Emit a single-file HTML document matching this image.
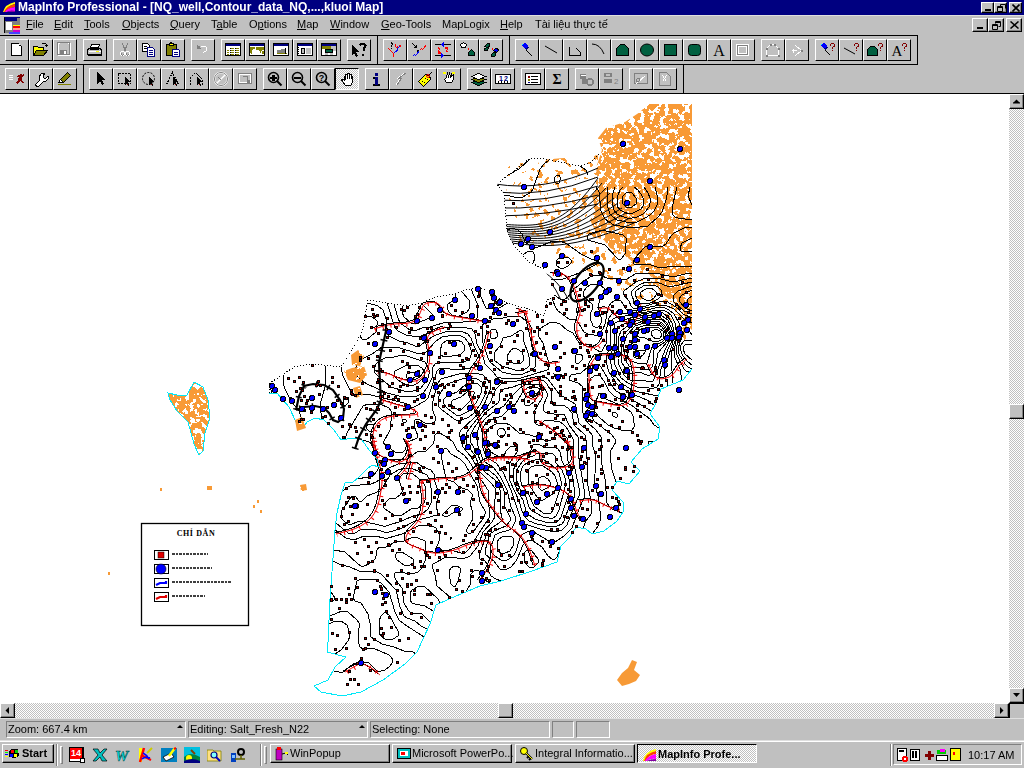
<!DOCTYPE html><html><head><meta charset="utf-8"><style>
*{margin:0;padding:0;box-sizing:border-box}
html,body{width:1024px;height:768px;overflow:hidden;background:#c0c0c0;font-family:"Liberation Sans",sans-serif;font-size:11px;color:#000}
.a{position:absolute}
.btn{position:absolute;width:24px;height:22px;background:#c0c0c0;border-top:1px solid #fff;border-left:1px solid #fff;border-right:1px solid #000;border-bottom:1px solid #000}
.btn svg{position:absolute;left:3px;top:2px}
.t{position:absolute;white-space:nowrap;will-change:transform}
.u{text-decoration:underline}
.dith{background-color:#fff;background-image:linear-gradient(45deg,#c0c0c0 25%,transparent 25%,transparent 75%,#c0c0c0 75%),linear-gradient(45deg,#c0c0c0 25%,transparent 25%,transparent 75%,#c0c0c0 75%);background-size:2px 2px;background-position:0 0,1px 1px}
.sunk{position:absolute;border-top:1px solid #808080;border-left:1px solid #808080;border-right:1px solid #fff;border-bottom:1px solid #fff}
.rais{position:absolute;background:#c0c0c0;border-top:1px solid #fff;border-left:1px solid #fff;border-right:1px solid #000;border-bottom:1px solid #000;box-shadow:inset -1px -1px 0 #808080}
</style></head><body>
<div class="a" style="left:0;top:0;width:1024px;height:15px;background:#000080"></div>
<div class="a" style="left:0;top:15px;width:1024px;height:1px;background:#dfdfdf"></div>
<div class="t" style="left:18px;top:0px;height:15px;line-height:15px;color:#fff;font-weight:bold;font-size:12px">MapInfo Professional - [NQ_well,Contour_data_NQ,...,kluoi Map]</div>
<div class="t" style="left:26px;top:16px;height:16px;line-height:16px"><span class="u">F</span>ile</div>
<div class="t" style="left:54px;top:16px;height:16px;line-height:16px"><span class="u">E</span>dit</div>
<div class="t" style="left:84px;top:16px;height:16px;line-height:16px"><span class="u">T</span>ools</div>
<div class="t" style="left:122px;top:16px;height:16px;line-height:16px"><span class="u">O</span>bjects</div>
<div class="t" style="left:170px;top:16px;height:16px;line-height:16px"><span class="u">Q</span>uery</div>
<div class="t" style="left:211px;top:16px;height:16px;line-height:16px">T<span class="u">a</span>ble</div>
<div class="t" style="left:249px;top:16px;height:16px;line-height:16px">O<span class="u">p</span>tions</div>
<div class="t" style="left:297px;top:16px;height:16px;line-height:16px"><span class="u">M</span>ap</div>
<div class="t" style="left:330px;top:16px;height:16px;line-height:16px"><span class="u">W</span>indow</div>
<div class="t" style="left:381px;top:16px;height:16px;line-height:16px"><span class="u">G</span>eo-Tools</div>
<div class="t" style="left:442px;top:16px;height:16px;line-height:16px">MapLogix</div>
<div class="t" style="left:500px;top:16px;height:16px;line-height:16px"><span class="u">H</span>elp</div>
<div class="t" style="left:535px;top:16px;height:16px;line-height:16px">Tài liệu thực tế</div>
<div class="a" style="left:0;top:35px;width:918px;height:30px;border:1px solid #000;border-left:none"></div>
<div class="a" style="left:0;top:64px;width:684px;height:30px;border:1px solid #000;border-left:none"></div>
<div class="a" style="left:0;top:93px;width:1024px;height:1px;background:#000"></div>
<div class="a" style="left:377px;top:35px;width:1px;height:30px;background:#000"></div>
<div class="a" style="left:509px;top:35px;width:1px;height:30px;background:#000"></div>
<div class="a" style="left:83px;top:64px;width:1px;height:30px;background:#000"></div>
<div class="btn" style="left:5px;top:39px"><svg width="16" height="16" viewBox="0 0 16 16" style="left:3px;top:2px" shape-rendering="crispEdges"><path d="M2.5 1.5h7l3 3v9h-10z" fill="#fff" stroke="#000" stroke-width="1" /><rect x="9" y="2" width="2" height="2" fill="#fff"/><rect x="10" y="3" width="1" height="1" fill="#000"/></svg></div>
<div class="btn" style="left:29px;top:39px"><svg width="16" height="16" viewBox="0 0 16 16" style="left:3px;top:2px" shape-rendering="crispEdges"><path d="M0.5 4.5h4l1 1h5v3h-7l-3 5z" fill="#ffff00" stroke="#000" stroke-width="1" /><path d="M3.5 8.5h11l-4 5h-10z" fill="#808000" stroke="#000" stroke-width="1" /><path d="M8.5 2.5l1-1h3l1 1v2" fill="none" stroke="#000" stroke-width="1" /><rect x="12" y="3" width="3" height="1" fill="#000"/><rect x="13" y="4" width="1" height="1" fill="#000"/></svg></div>
<div class="btn" style="left:53px;top:39px"><svg width="16" height="16" viewBox="0 0 16 16" style="left:3px;top:2px" shape-rendering="crispEdges"><path d="M1.5 1.5h12v12h-12z" fill="none" stroke="#fff" stroke-width="1" /><path d="M0.5 0.5h12v12h-12z" fill="none" stroke="#808080" stroke-width="1" /><rect x="3" y="1" width="8" height="5" fill="#c0c0c0"/><rect x="3" y="8" width="7" height="5" fill="#808080"/><rect x="7" y="9" width="2" height="3" fill="#fff"/></svg></div>
<div class="btn" style="left:83px;top:39px"><svg width="16" height="16" viewBox="0 0 16 16" style="left:3px;top:2px" shape-rendering="crispEdges"><path d="M4.5 2.5h8l-1 3h-8z" fill="#fff" stroke="#000" stroke-width="1" /><path d="M1.5 6.5h12l1 2v4h-14v-4z" fill="#c0c0c0" stroke="#000" stroke-width="1" /><rect x="2" y="9" width="12" height="1" fill="#fff"/><rect x="9" y="9" width="3" height="1" fill="#ffff00"/><rect x="1" y="12" width="14" height="2" fill="#000"/><rect x="3" y="7" width="9" height="1" fill="#000"/></svg></div>
<div class="btn" style="left:113px;top:39px"><svg width="16" height="16" viewBox="0 0 16 16" style="left:3px;top:2px" shape-rendering="crispEdges"><path d="M5.5 1.5l3 8M10.5 1.5l-3 8" fill="none" stroke="#808080" stroke-width="1" /><path d="M3.5 10.5a2 2 0 1 0 4 2a2 2 0 1 0-4-2M8.5 10.5a2 2 0 1 0 4 2a2 2 0 1 0-4-2" fill="none" stroke="#fff" stroke-width="1" /><path d="M4.5 11.5a1 1 0 1 0 2 1M9.5 11.5a1 1 0 1 0 2 1" fill="none" stroke="#808080" stroke-width="1" /></svg></div>
<div class="btn" style="left:137px;top:39px"><svg width="16" height="16" viewBox="0 0 16 16" style="left:3px;top:2px" shape-rendering="crispEdges"><path d="M1.5 1.5h5l2 2v6h-7z" fill="#fff" stroke="#000" stroke-width="1" /><rect x="3" y="4" width="3" height="1" fill="#000"/><rect x="3" y="6" width="3" height="1" fill="#000"/><path d="M6.5 5.5h5l2 2v7h-7z" fill="#fff" stroke="#000080" stroke-width="1" /><rect x="8" y="8" width="4" height="1" fill="#000080"/><rect x="8" y="10" width="4" height="1" fill="#000080"/><rect x="8" y="12" width="4" height="1" fill="#000080"/></svg></div>
<div class="btn" style="left:161px;top:39px"><svg width="16" height="16" viewBox="0 0 16 16" style="left:3px;top:2px" shape-rendering="crispEdges"><path d="M1.5 2.5h10v11h-10z" fill="#808000" stroke="#000" stroke-width="1" /><path d="M4.5 1.5h4v2h-4z" fill="#ffff00" stroke="#000" stroke-width="1" /><rect x="5" y="0" width="2" height="1" fill="#000"/><path d="M7.5 7.5h6l1 1v6h-7z" fill="#fff" stroke="#000080" stroke-width="1" /><rect x="9" y="10" width="4" height="1" fill="#000080"/><rect x="9" y="12" width="4" height="1" fill="#000080"/></svg></div>
<div class="btn" style="left:191px;top:39px"><svg width="16" height="16" viewBox="0 0 16 16" style="left:3px;top:2px" shape-rendering="crispEdges"><path d="M5.5 6.5l-3 -3M2.5 3.5v3h3" fill="none" stroke="#808080" stroke-width="1" /><path d="M5.5 4.5h4a2.5 2.5 0 0 1 0 5l-2 2" fill="none" stroke="#fff" stroke-width="1" /><rect x="2" y="4" width="3" height="3" fill="#808080"/></svg></div>
<div class="btn" style="left:221px;top:39px"><svg width="16" height="16" viewBox="0 0 16 16" style="left:3px;top:2px" shape-rendering="crispEdges"><rect x="0" y="1" width="16" height="13" fill="#000"/><rect x="1" y="2" width="14" height="2" fill="#000080"/><rect x="1" y="4" width="14" height="9" fill="#fff"/><rect x="5" y="6" width="1" height="1" fill="#000"/><rect x="6" y="6" width="3" height="1" fill="#808000"/><rect x="10" y="6" width="1" height="1" fill="#000"/><rect x="11" y="6" width="3" height="1" fill="#808000"/><rect x="5" y="8" width="1" height="1" fill="#000"/><rect x="6" y="8" width="3" height="1" fill="#808000"/><rect x="10" y="8" width="1" height="1" fill="#000"/><rect x="11" y="8" width="3" height="1" fill="#808000"/><rect x="5" y="10" width="1" height="1" fill="#000"/><rect x="6" y="10" width="3" height="1" fill="#808000"/><rect x="10" y="10" width="1" height="1" fill="#000"/><rect x="11" y="10" width="3" height="1" fill="#808000"/><rect x="5" y="12" width="1" height="1" fill="#000"/><rect x="6" y="12" width="3" height="1" fill="#808000"/><rect x="10" y="12" width="1" height="1" fill="#000"/><rect x="11" y="12" width="3" height="1" fill="#808000"/><rect x="2" y="8" width="2" height="1" fill="#808000"/><rect x="2" y="10" width="2" height="1" fill="#808000"/><rect x="2" y="12" width="2" height="1" fill="#808000"/></svg></div>
<div class="btn" style="left:245px;top:39px"><svg width="16" height="16" viewBox="0 0 16 16" style="left:3px;top:2px" shape-rendering="crispEdges"><rect x="0" y="1" width="16" height="13" fill="#000"/><rect x="1" y="2" width="14" height="2" fill="#000080"/><rect x="1" y="4" width="14" height="9" fill="#fff"/><path d="M1 5h5v2h-2l-1 2v3h-1l-1-3z" fill="#808000" stroke="none" stroke-width="1" /><path d="M7 5h8v3h-2l-1 1v2h-1v-2l-2-1-2 0z" fill="#808000" stroke="none" stroke-width="1" /><rect x="13" y="9" width="2" height="3" fill="#808000"/></svg></div>
<div class="btn" style="left:269px;top:39px"><svg width="16" height="16" viewBox="0 0 16 16" style="left:3px;top:2px" shape-rendering="crispEdges"><rect x="0" y="1" width="16" height="13" fill="#000"/><rect x="1" y="2" width="14" height="2" fill="#000080"/><rect x="1" y="4" width="14" height="9" fill="#fff"/><rect x="4" y="8" width="5" height="4" fill="#808080"/><rect x="8" y="6" width="5" height="6" fill="#808080"/><rect x="4" y="11" width="10" height="1" fill="#808000"/><rect x="8" y="6" width="5" height="1" fill="#fff"/><rect x="12" y="6" width="1" height="6" fill="#000"/></svg></div>
<div class="btn" style="left:293px;top:39px"><svg width="16" height="16" viewBox="0 0 16 16" style="left:3px;top:2px" shape-rendering="crispEdges"><rect x="0" y="1" width="16" height="13" fill="#000"/><rect x="1" y="2" width="14" height="2" fill="#000080"/><rect x="1" y="4" width="14" height="9" fill="#fff"/><rect x="4" y="6" width="4" height="6" fill="#000"/><rect x="5" y="7" width="2" height="4" fill="#c0c0c0"/><rect x="9" y="6" width="5" height="6" fill="#c0c0c0"/><rect x="1" y="5" width="1" height="1" fill="#000"/><rect x="1" y="7" width="1" height="1" fill="#000"/><rect x="1" y="9" width="1" height="1" fill="#000"/><rect x="1" y="11" width="1" height="1" fill="#000"/><rect x="4" y="4" width="1" height="1" fill="#fff"/><rect x="7" y="4" width="1" height="1" fill="#fff"/><rect x="10" y="4" width="1" height="1" fill="#fff"/><rect x="13" y="4" width="1" height="1" fill="#fff"/></svg></div>
<div class="btn" style="left:317px;top:39px"><svg width="16" height="16" viewBox="0 0 16 16" style="left:3px;top:2px" shape-rendering="crispEdges"><rect x="0" y="1" width="16" height="13" fill="#000"/><rect x="1" y="2" width="14" height="2" fill="#000080"/><rect x="1" y="4" width="14" height="9" fill="#fff"/><rect x="1" y="4" width="10" height="3" fill="#808000"/><rect x="10" y="4" width="5" height="5" fill="#c0c0c0"/><rect x="4" y="7" width="8" height="4" fill="#006040"/><path d="M4.5 7.5h7v3h-7z" fill="none" stroke="#000" stroke-width="1" /><rect x="4" y="11" width="3" height="2" fill="#c0c0c0"/><rect x="9" y="11" width="3" height="2" fill="#c0c0c0"/></svg></div>
<div class="btn" style="left:347px;top:39px"><svg width="16" height="16" viewBox="0 0 16 16" style="left:3px;top:2px" shape-rendering="crispEdges"><path d="M1 3v10l2-2 2 4 2-1-2-4h3z" fill="#000" stroke="none" stroke-width="1" /><path d="M8.5 3.5q1-2 3-2t3 2q0 2-2 3v2" fill="none" stroke="#000" stroke-width="2" /><rect x="11" y="12" width="2" height="2" fill="#000"/></svg></div>
<div class="btn" style="left:383px;top:39px"><svg width="16" height="16" viewBox="0 0 16 16" style="left:3px;top:2px" shape-rendering="crispEdges"><path d="M1.5 6.5l1 1 1 1 1 1 1 1 1 1v3" fill="none" stroke="#ff0000" stroke-width="1" /><path d="M6.5 11.5l2-2 2-1 0-2 1-1 1-1" fill="none" stroke="#0000ff" stroke-width="1" /><path d="M8.5 1.5v3l1 1 2-1 1-1 2 1" fill="none" stroke="#ff0000" stroke-width="1" /><path d="M3.5 1.5q1-1 2 0t-1 2v1" fill="none" stroke="#000" stroke-width="1" /><rect x="4" y="6" width="1" height="1" fill="#000"/></svg></div>
<div class="btn" style="left:407px;top:39px"><svg width="16" height="16" viewBox="0 0 16 16" style="left:3px;top:2px" shape-rendering="crispEdges"><path d="M1.5 1.5l4 4M5.5 2.5v3h-3" fill="none" stroke="#000" stroke-width="1" /><rect x="6" y="8" width="2" height="2" fill="#000"/><path d="M1.5 14.5l2-2 1 1 2-2 1-2" fill="none" stroke="#0000ff" stroke-width="1" /><path d="M8.5 8.5l2-2 1 1 2-2 1-2" fill="none" stroke="#ff0000" stroke-width="1" /></svg></div>
<div class="btn" style="left:431px;top:39px"><svg width="16" height="16" viewBox="0 0 16 16" style="left:3px;top:2px" shape-rendering="crispEdges"><rect x="0" y="2" width="16" height="1" fill="#000"/><rect x="0" y="13" width="16" height="1" fill="#000"/><path d="M9 0v5l-3-2.5z" fill="#0000ff" stroke="none" stroke-width="1" /><path d="M6 11v5l3-2.5z" fill="#0000ff" stroke="none" stroke-width="1" /><path d="M3.5 5.5l1 2-1 1 1 2" fill="none" stroke="#ff0000" stroke-width="1" /><path d="M11.5 5.5l1 2-1 1 1 2" fill="none" stroke="#ff0000" stroke-width="1" /><rect x="3" y="10" width="3" height="2" fill="#ff0000"/><rect x="10" y="5" width="3" height="2" fill="#ff0000"/></svg></div>
<div class="btn" style="left:455px;top:39px"><svg width="16" height="16" viewBox="0 0 16 16" style="left:3px;top:2px" shape-rendering="crispEdges"><path d="M1.5 2.5l3-2 3 2-1 3h-4z" fill="#fff" stroke="#000" stroke-width="1" /><path d="M8 7l2-2v3z" fill="#ff0000" stroke="none" stroke-width="1" /><path d="M9.5 10.5l3-3 3 3v3h-6z" fill="#006040" stroke="#000" stroke-width="1" /></svg></div>
<div class="btn" style="left:479px;top:39px"><svg width="16" height="16" viewBox="0 0 16 16" style="left:3px;top:2px" shape-rendering="crispEdges"><path d="M1.5 4.5l3-3h2v3l-2 1z" fill="#006040" stroke="#000" stroke-width="1" /><path d="M1.5 6.5l3-1h1l-1 3h-3z" fill="#006040" stroke="#000" stroke-width="1" /><path d="M8 7l2-2v3z" fill="#ff0000" stroke="none" stroke-width="1" /><path d="M10.5 8.5l2-2h2l1 2-2 2z" fill="#0000ff" stroke="#000" stroke-width="1" /><path d="M8.5 12.5l2-2h2v3l-1 1h-3z" fill="#006040" stroke="#000" stroke-width="1" /></svg></div>
<div class="btn" style="left:515px;top:39px"><svg width="16" height="16" viewBox="0 0 16 16" style="left:3px;top:2px" shape-rendering="crispEdges"><path d="M2 3l4-2 3 3-2 4z" fill="#0000ff" stroke="none" stroke-width="1" /><rect x="3" y="2" width="1" height="1" fill="#00ffff"/><path d="M7.5 8.5l6 6" fill="none" stroke="#000" stroke-width="1" /><path d="M5 6l5-1-2 3z" fill="#000080" stroke="none" stroke-width="1" /></svg></div>
<div class="btn" style="left:539px;top:39px"><svg width="16" height="16" viewBox="0 0 16 16" style="left:3px;top:2px" shape-rendering="crispEdges"><path d="M2 4L14 11" fill="none" stroke="#000" stroke-width="1" shape-rendering="auto"/></svg></div>
<div class="btn" style="left:563px;top:39px"><svg width="16" height="16" viewBox="0 0 16 16" style="left:3px;top:2px" shape-rendering="crispEdges"><path d="M2.5 4.5v9h11v-3l-4-4" fill="none" stroke="#000" stroke-width="1" /></svg></div>
<div class="btn" style="left:587px;top:39px"><svg width="16" height="16" viewBox="0 0 16 16" style="left:3px;top:2px" shape-rendering="crispEdges"><path d="M1 2q8 0 12 10" fill="none" stroke="#000" stroke-width="1" shape-rendering="auto"/></svg></div>
<div class="btn" style="left:611px;top:39px"><svg width="16" height="16" viewBox="0 0 16 16" style="left:3px;top:2px" shape-rendering="crispEdges"><path d="M1.5 6.5l4-4h4l4 4v7h-12z" fill="#006040" stroke="#000" stroke-width="1" /></svg></div>
<div class="btn" style="left:635px;top:39px"><svg width="16" height="16" viewBox="0 0 16 16" style="left:3px;top:2px" shape-rendering="crispEdges"><ellipse cx="8" cy="8" rx="6.5" ry="6" fill="#006040" stroke="#000" shape-rendering="auto"/></svg></div>
<div class="btn" style="left:659px;top:39px"><svg width="16" height="16" viewBox="0 0 16 16" style="left:3px;top:2px" shape-rendering="crispEdges"><path d="M1.5 2.5h12v11h-12z" fill="#006040" stroke="#000" stroke-width="1" /></svg></div>
<div class="btn" style="left:683px;top:39px"><svg width="16" height="16" viewBox="0 0 16 16" style="left:3px;top:2px" shape-rendering="crispEdges"><rect x="1.5" y="2.5" width="12" height="11" rx="3" fill="#006040" stroke="#000" shape-rendering="auto"/></svg></div>
<div class="btn" style="left:707px;top:39px"><svg width="16" height="16" viewBox="0 0 16 16" style="left:3px;top:2px" shape-rendering="crispEdges"><text x="8" y="14" font-family="Liberation Serif" font-size="16" text-anchor="middle" fill="#000">A</text></svg></div>
<div class="btn" style="left:731px;top:39px"><svg width="16" height="16" viewBox="0 0 16 16" style="left:3px;top:2px" shape-rendering="crispEdges"><path d="M1.5 2.5h12v11h-12z" fill="none" stroke="#fff" stroke-width="1" /><path d="M2.5 3.5h10v9h-10z" fill="none" stroke="#808080" stroke-width="1" /><path d="M3.5 4.5h8v7h-8z" fill="none" stroke="#fff" stroke-width="1" /></svg></div>
<div class="btn" style="left:761px;top:39px"><svg width="16" height="16" viewBox="0 0 16 16" style="left:3px;top:2px" shape-rendering="crispEdges"><path d="M1.5 6.5l4-4h4l4 4v7h-12z" fill="none" stroke="#fff" stroke-width="1" /><rect x="1" y="6" width="2" height="2" fill="#808080"/><rect x="5" y="2" width="2" height="2" fill="#808080"/><rect x="9" y="2" width="2" height="2" fill="#808080"/><rect x="13" y="6" width="2" height="2" fill="#808080"/><rect x="13" y="13" width="2" height="2" fill="#808080"/><rect x="1" y="13" width="2" height="2" fill="#808080"/></svg></div>
<div class="btn" style="left:785px;top:39px"><svg width="16" height="16" viewBox="0 0 16 16" style="left:3px;top:2px" shape-rendering="crispEdges"><path d="M6.5 3.5l6 5-6 5" fill="none" stroke="#fff" stroke-width="1" /><path d="M2.5 8.5h5M4.5 6.5v4" fill="none" stroke="#fff" stroke-width="1" /><rect x="12" y="8" width="2" height="2" fill="#808080"/></svg></div>
<div class="btn" style="left:815px;top:39px"><svg width="16" height="16" viewBox="0 0 16 16" style="left:3px;top:2px" shape-rendering="crispEdges"><path d="M1 3l4-2 3 3-2 4z" fill="#0000ff" stroke="none" stroke-width="1" /><rect x="2" y="2" width="1" height="1" fill="#00ffff"/><path d="M6.5 8.5l5 5" fill="none" stroke="#000" stroke-width="1" /><path d="M4 6l5-1-2 3z" fill="#000080" stroke="none" stroke-width="1" /><path d="M11.5 3.5q0-2 2-2t2 2q0 1-2 2v1" fill="none" stroke="#800000" stroke-width="1" /><rect x="13" y="8" width="1" height="1" fill="#800000"/></svg></div>
<div class="btn" style="left:839px;top:39px"><svg width="16" height="16" viewBox="0 0 16 16" style="left:3px;top:2px" shape-rendering="crispEdges"><path d="M1 6L12 12" fill="none" stroke="#000" stroke-width="1" shape-rendering="auto"/><path d="M11.5 3.5q0-2 2-2t2 2q0 1-2 2v1" fill="none" stroke="#800000" stroke-width="1" /><rect x="13" y="8" width="1" height="1" fill="#800000"/></svg></div>
<div class="btn" style="left:863px;top:39px"><svg width="16" height="16" viewBox="0 0 16 16" style="left:3px;top:2px" shape-rendering="crispEdges"><path d="M0.5 7.5l3-3h4l3 3v6h-10z" fill="#006040" stroke="#000" stroke-width="1" /><path d="M11.5 3.5q0-2 2-2t2 2q0 1-2 2v1" fill="none" stroke="#800000" stroke-width="1" /><rect x="13" y="8" width="1" height="1" fill="#800000"/></svg></div>
<div class="btn" style="left:887px;top:39px"><svg width="16" height="16" viewBox="0 0 16 16" style="left:3px;top:2px" shape-rendering="crispEdges"><text x="6" y="14" font-family="Liberation Serif" font-size="15" text-anchor="middle" fill="#000">A</text><path d="M11.5 3.5q0-2 2-2t2 2q0 1-2 2v1" fill="none" stroke="#800000" stroke-width="1" /><rect x="13" y="8" width="1" height="1" fill="#800000"/></svg></div>
<div class="btn" style="left:5px;top:68px"><svg width="16" height="16" viewBox="0 0 16 16" style="left:3px;top:2px" shape-rendering="crispEdges"><rect x="0" y="4" width="4" height="1" fill="#fff"/><rect x="0" y="6" width="4" height="1" fill="#fff"/><rect x="0" y="8" width="4" height="1" fill="#fff"/><path d="M6 12l3-3 1-3-2 0 1-2 3 1 2-2 1 1-2 3v2l2 3h-2l-2-2-2 3z" fill="#800000" stroke="none" stroke-width="1" /><rect x="11" y="3" width="2" height="2" fill="#800000"/></svg></div>
<div class="btn" style="left:29px;top:68px"><svg width="16" height="16" viewBox="0 0 16 16" style="left:3px;top:2px" shape-rendering="crispEdges"><path d="M2 14l5-5-1-3 3-4h3l-2 3 1 2 2 0 2-2 1 2-3 3-3 1-5 5z" fill="#fff" stroke="#000" stroke-width="1" /></svg></div>
<div class="btn" style="left:53px;top:68px"><svg width="16" height="16" viewBox="0 0 16 16" style="left:3px;top:2px" shape-rendering="crispEdges"><path d="M1.5 11.5l2-3 7-7 3 3-7 7z" fill="#808000" stroke="#000" stroke-width="1" /><path d="M1.5 11.5l2-3 3 3z" fill="#fff" stroke="#000" stroke-width="1" /><rect x="1" y="13" width="13" height="1" fill="#808000"/></svg></div>
<div class="btn" style="left:89px;top:68px"><svg width="16" height="16" viewBox="0 0 16 16" style="left:3px;top:2px" shape-rendering="crispEdges"><path d="M4 1v12l3-3 2 4 2-1-2-4h4z" fill="#000" stroke="none" stroke-width="1" /></svg></div>
<div class="btn" style="left:113px;top:68px"><svg width="16" height="16" viewBox="0 0 16 16" style="left:3px;top:2px" shape-rendering="crispEdges"><path d="M1.5 2.5h12v10h-12z" fill="none" stroke="#000" stroke-width="1" stroke-dasharray="2 1"/><path d="M8 6v8l2-2 1 3 1-1-1-3h3z" fill="#000" stroke="none" stroke-width="1" /><rect x="10" y="13" width="1" height="1" fill="#800000"/></svg></div>
<div class="btn" style="left:137px;top:68px"><svg width="16" height="16" viewBox="0 0 16 16" style="left:3px;top:2px" shape-rendering="crispEdges"><circle cx="7.5" cy="7.5" r="6" fill="none" stroke="#000" stroke-dasharray="2 1.3" shape-rendering="auto"/><path d="M8 6v8l2-2 1 3 1-1-1-3h3z" fill="#000" stroke="none" stroke-width="1" /><rect x="10" y="13" width="1" height="1" fill="#800000"/></svg></div>
<div class="btn" style="left:161px;top:68px"><svg width="16" height="16" viewBox="0 0 16 16" style="left:3px;top:2px" shape-rendering="crispEdges"><path d="M1.5 13.5l6-12 6 12" fill="none" stroke="#000" stroke-width="1" stroke-dasharray="2 1"/><path d="M8 6v8l2-2 1 3 1-1-1-3h3z" fill="#000" stroke="none" stroke-width="1" /><rect x="10" y="13" width="1" height="1" fill="#800000"/></svg></div>
<div class="btn" style="left:185px;top:68px"><svg width="16" height="16" viewBox="0 0 16 16" style="left:3px;top:2px" shape-rendering="crispEdges"><path d="M1.5 13.5v-7l5-5 7 7v5" fill="none" stroke="#000" stroke-width="1" stroke-dasharray="2 1"/><path d="M8 6v8l2-2 1 3 1-1-1-3h3z" fill="#000" stroke="none" stroke-width="1" /><rect x="10" y="13" width="1" height="1" fill="#800000"/></svg></div>
<div class="btn" style="left:209px;top:68px"><svg width="16" height="16" viewBox="0 0 16 16" style="left:3px;top:2px" shape-rendering="crispEdges"><circle cx="8" cy="8" r="6.5" fill="none" stroke="#fff" stroke-width="2" shape-rendering="auto"/><circle cx="8" cy="8" r="6.5" fill="none" stroke="#808080" stroke-width="1" shape-rendering="auto"/><path d="M4 12l8-8" fill="none" stroke="#fff" stroke-width="1.5" shape-rendering="auto"/><path d="M5 6l3 3" fill="none" stroke="#808080" stroke-width="1" /></svg></div>
<div class="btn" style="left:233px;top:68px"><svg width="16" height="16" viewBox="0 0 16 16" style="left:3px;top:2px" shape-rendering="crispEdges"><path d="M1.5 2.5h13v10h-13z" fill="none" stroke="#808080" stroke-width="1" /><path d="M2.5 3.5h11v8h-11z" fill="none" stroke="#fff" stroke-width="1" /><path d="M5.5 5.5h5v6" fill="none" stroke="#808080" stroke-width="1" /><rect x="10" y="9" width="3" height="3" fill="#808080"/></svg></div>
<div class="btn" style="left:263px;top:68px"><svg width="16" height="16" viewBox="0 0 16 16" style="left:3px;top:2px" shape-rendering="crispEdges"><circle cx="6.5" cy="6.5" r="5" fill="#c0c0c0" stroke="#000" stroke-width="1.6" shape-rendering="auto"/><path d="M10 10l4.5 4.5" fill="none" stroke="#000" stroke-width="2" shape-rendering="auto"/><rect x="3" y="6" width="7" height="2" fill="#000"/><rect x="5" y="4" width="3" height="6" fill="#000"/></svg></div>
<div class="btn" style="left:287px;top:68px"><svg width="16" height="16" viewBox="0 0 16 16" style="left:3px;top:2px" shape-rendering="crispEdges"><circle cx="6.5" cy="6.5" r="5" fill="#c0c0c0" stroke="#000" stroke-width="1.6" shape-rendering="auto"/><path d="M10 10l4.5 4.5" fill="none" stroke="#000" stroke-width="2" shape-rendering="auto"/><rect x="3" y="6" width="7" height="2" fill="#000"/></svg></div>
<div class="btn" style="left:311px;top:68px"><svg width="16" height="16" viewBox="0 0 16 16" style="left:3px;top:2px" shape-rendering="crispEdges"><circle cx="6.5" cy="6.5" r="5" fill="#c0c0c0" stroke="#000" stroke-width="1.6" shape-rendering="auto"/><path d="M10 10l4.5 4.5" fill="none" stroke="#000" stroke-width="2" shape-rendering="auto"/><text x="6.5" y="10" font-family="Liberation Sans" font-weight="bold" font-size="9" text-anchor="middle">?</text></svg></div>
<div class="btn dith" style="left:335px;top:68px;border-top-color:#000;border-left-color:#000;border-right-color:#fff;border-bottom-color:#fff"><svg width="16" height="16" viewBox="0 0 16 16" style="left:4px;top:3px" shape-rendering="crispEdges"><path d="M4.5 8.5v-4h1v3-5h2v4-5h2v5-4h2v4-2h1v6l-2 3h-5l-3-4-1-2h2z" fill="#fff" stroke="#000" stroke-width="1" /></svg></div>
<div class="btn" style="left:365px;top:68px"><svg width="16" height="16" viewBox="0 0 16 16" style="left:3px;top:2px" shape-rendering="crispEdges"><rect x="6" y="2" width="3" height="3" fill="#000080"/><path d="M4.5 6.5h4v7h2v1h-6v-1h2v-6h-2z" fill="#000080" stroke="#000" stroke-width="1" /><rect x="6" y="6" width="3" height="8" fill="#000080"/></svg></div>
<div class="btn" style="left:389px;top:68px"><svg width="16" height="16" viewBox="0 0 16 16" style="left:3px;top:2px" shape-rendering="crispEdges"><path d="M12.5 1.5l-8 6h3l-5 7" fill="none" stroke="#fff" stroke-width="1" /><path d="M13.5 1.5l-8 6h3l-5 7" fill="none" stroke="#808080" stroke-width="1" /></svg></div>
<div class="btn" style="left:413px;top:68px"><svg width="16" height="16" viewBox="0 0 16 16" style="left:3px;top:2px" shape-rendering="crispEdges"><path d="M1.5 10.5l7-7 4 1 1 4-7 7z" fill="#ffff00" stroke="#000" stroke-width="1" /><rect x="5" y="10" width="1" height="1" fill="#000"/><rect x="8" y="7" width="1" height="1" fill="#000"/><rect x="7" y="11" width="1" height="1" fill="#000"/><rect x="10" y="8" width="1" height="1" fill="#000"/><circle cx="11" cy="5" r="1.5" fill="none" stroke="#ff0000" shape-rendering="auto"/><path d="M12 4l3-3" fill="none" stroke="#000" stroke-width="1" /></svg></div>
<div class="btn" style="left:437px;top:68px"><svg width="16" height="16" viewBox="0 0 16 16" style="left:3px;top:2px" shape-rendering="crispEdges"><path d="M3.5 8.5l2-2 1-4 1 3 1-3 1 3 1-3v3l2-2v5l-2 3h-5z" fill="#fff" stroke="#000" stroke-width="1" /><rect x="2" y="1" width="3" height="2" fill="#ffff00"/><rect x="11" y="1" width="3" height="2" fill="#ffff00"/></svg></div>
<div class="btn" style="left:467px;top:68px"><svg width="16" height="16" viewBox="0 0 16 16" style="left:3px;top:2px" shape-rendering="crispEdges"><path d="M0.5 11.5l7-3 7 3-7 3z" fill="#006040" stroke="#000" stroke-width="1" /><path d="M0.5 8.5l7-3 7 3-7 3z" fill="#808000" stroke="#000" stroke-width="1" /><path d="M0.5 5.5l7-3 7 3-7 3z" fill="#fff" stroke="#000" stroke-width="1" /></svg></div>
<div class="btn" style="left:491px;top:68px"><svg width="16" height="16" viewBox="0 0 16 16" style="left:3px;top:2px" shape-rendering="crispEdges"><rect x="0" y="3" width="16" height="10" fill="#000"/><rect x="1" y="4" width="14" height="8" fill="#fff"/><text x="4" y="10" font-family="Liberation Sans" font-weight="bold" font-size="7" fill="#000080">1</text><text x="9" y="10" font-family="Liberation Sans" font-weight="bold" font-size="7" fill="#000080">2</text><rect x="3" y="10" width="1" height="2" fill="#000"/><rect x="6" y="10" width="1" height="2" fill="#000"/><rect x="9" y="10" width="1" height="2" fill="#000"/><rect x="12" y="10" width="1" height="2" fill="#000"/></svg></div>
<div class="btn" style="left:521px;top:68px"><svg width="16" height="16" viewBox="0 0 16 16" style="left:3px;top:2px" shape-rendering="crispEdges"><rect x="0" y="2" width="16" height="12" fill="#000"/><rect x="1" y="3" width="14" height="10" fill="#fff"/><rect x="3" y="5" width="2" height="2" fill="#800000"/><rect x="3" y="8" width="2" height="2" fill="#808000"/><rect x="3" y="11" width="2" height="1" fill="#000080"/><rect x="6" y="5" width="7" height="1" fill="#000"/><rect x="6" y="8" width="7" height="1" fill="#000"/><rect x="6" y="11" width="7" height="1" fill="#000"/></svg></div>
<div class="btn" style="left:545px;top:68px"><svg width="16" height="16" viewBox="0 0 16 16" style="left:3px;top:2px" shape-rendering="crispEdges"><text x="8" y="13" font-family="Liberation Serif" font-weight="bold" font-size="14" text-anchor="middle">&#931;</text></svg></div>
<div class="btn" style="left:575px;top:68px"><svg width="16" height="16" viewBox="0 0 16 16" style="left:3px;top:2px" shape-rendering="crispEdges"><rect x="1" y="3" width="6" height="5" fill="#808080"/><rect x="3" y="8" width="6" height="5" fill="#808080"/><circle cx="11" cy="11" r="3" fill="none" stroke="#808080" stroke-width="1.5"/><rect x="2" y="4" width="5" height="1" fill="#fff"/></svg></div>
<div class="btn" style="left:599px;top:68px"><svg width="16" height="16" viewBox="0 0 16 16" style="left:3px;top:2px" shape-rendering="crispEdges"><rect x="1" y="2" width="8" height="4" fill="#808080"/><rect x="1" y="8" width="8" height="4" fill="#808080"/><rect x="3" y="3" width="4" height="2" fill="#c0c0c0"/><text x="11" y="13" font-family="Liberation Sans" font-size="8" fill="#808080">2</text></svg></div>
<div class="btn" style="left:629px;top:68px"><svg width="16" height="16" viewBox="0 0 16 16" style="left:3px;top:2px" shape-rendering="crispEdges"><path d="M1.5 2.5h13v10h-13z" fill="none" stroke="#808080" stroke-width="1" /><path d="M3.5 12.5l9-8" fill="none" stroke="#fff" stroke-width="1" /><circle cx="5" cy="9" r="1.5" fill="none" stroke="#808080"/></svg></div>
<div class="btn" style="left:653px;top:68px"><svg width="16" height="16" viewBox="0 0 16 16" style="left:3px;top:2px" shape-rendering="crispEdges"><path d="M2.5 1.5h7l4 4v9h-11z" fill="none" stroke="#808080" stroke-width="1" /><path d="M5.5 4.5l4 6M9.5 4.5l-4 6" fill="none" stroke="#fff" stroke-width="1" /></svg></div>
<div class="a" style="left:0;top:94px;width:1009px;height:609px;background:#fff;overflow:hidden">
<svg class="a" style="left:0;top:0" width="1009" height="609" viewBox="0 0 1009 609">
<defs><filter id="orn" x="0" y="0" width="100%" height="100%" color-interpolation-filters="sRGB"><feTurbulence type="fractalNoise" baseFrequency="0.2" numOctaves="4" seed="3"/><feColorMatrix values="0 0 0 0 0.973  0 0 0 0 0.604  0 0 0 0 0.212  0 0 0 -30.0 17.600"/><feComponentTransfer><feFuncA type="discrete" tableValues="0 1"/></feComponentTransfer></filter><filter id="orm" x="0" y="0" width="100%" height="100%" color-interpolation-filters="sRGB"><feTurbulence type="fractalNoise" baseFrequency="0.16" numOctaves="3" seed="5"/><feColorMatrix values="0 0 0 0 0.973  0 0 0 0 0.604  0 0 0 0 0.212  0 0 0 -30.0 11.600"/><feComponentTransfer><feFuncA type="discrete" tableValues="0 1"/></feComponentTransfer></filter><filter id="ors" x="0" y="0" width="100%" height="100%" color-interpolation-filters="sRGB"><feTurbulence type="fractalNoise" baseFrequency="0.16" numOctaves="3" seed="8"/><feColorMatrix values="0 0 0 0 0.973  0 0 0 0 0.604  0 0 0 0 0.212  0 0 0 -30.0 9.800"/><feComponentTransfer><feFuncA type="discrete" tableValues="0 1"/></feComponentTransfer></filter><filter id="orp" x="0" y="0" width="100%" height="100%" color-interpolation-filters="sRGB"><feTurbulence type="fractalNoise" baseFrequency="0.25" numOctaves="3" seed="11"/><feColorMatrix values="0 0 0 0 0.973  0 0 0 0 0.604  0 0 0 0 0.212  0 0 0 -30.0 20.300"/><feComponentTransfer><feFuncA type="discrete" tableValues="0 1"/></feComponentTransfer></filter></defs>
<clipPath id="oc1"><polygon points="648,10 692,10 692,236 680,224 676,211 660,198 652,182 645,178 628,164 618,158 610,154 604,146 598,144 594,134 590,126 595,116 592,101 598,88 596,74 602,56 598,44 606,34 625,28 640,18"/></clipPath>
<g clip-path="url(#oc1)"><rect x="490" y="0" width="210" height="270" filter="url(#orn)"/></g>
<clipPath id="oc2"><polygon points="540,66 600,61 596,146 640,168 692,231 692,256 664,231 625,198 590,178 560,164 540,150 530,126 522,101"/></clipPath>
<g clip-path="url(#oc2)"><rect x="490" y="0" width="210" height="270" filter="url(#orm)"/></g>
<clipPath id="oc3"><polygon points="505,71 545,66 540,156 520,151 508,121"/></clipPath>
<g clip-path="url(#oc3)"><rect x="490" y="0" width="210" height="270" filter="url(#ors)"/></g>
<path fill="none" stroke="#000" stroke-width="1" shape-rendering="crispEdges" d="M692 202 688 205 687 207 688 210 692 211 M651 206 654 204 656 201 656 198 654 196 651 194 648 194 644 196 641 198 640 201 642 204 646 206 651 206 M692 196 682 201 679 205 680 208 684 213 687 215 692 217 M650 209 658 205 661 202 662 199 661 196 658 193 654 191 650 191 645 191 640 194 636 197 635 200 637 205 640 209 644 210 650 209 M692 192 678 197 674 201 673 205 674 208 684 217 692 220 M692 251 686 250 684 252 683 255 685 260 692 266 M402 421 411 415 418 414 421 412 424 409 425 406 425 392 423 388 413 380 409 379 403 380 399 384 399 387 402 394 402 398 400 401 396 404 389 405 383 411 383 413 385 415 394 421 398 422 402 421 M692 188 670 193 656 188 646 188 641 190 636 193 632 197 631 200 635 209 638 212 646 212 662 207 666 207 676 213 683 220 692 224 M692 247 687 246 684 247 681 251 680 255 683 262 688 268 692 271 M521 269 523 267 524 264 522 258 517 255 514 254 511 256 507 262 507 266 515 270 521 269 M462 315 472 305 474 300 474 298 473 297 467 298 461 303 453 306 451 308 451 311 455 314 459 316 462 315 M617 323 618 321 617 320 615 318 613 318 612 320 613 322 615 323 617 323 M386 432 402 427 413 422 422 420 428 415 431 409 432 398 429 385 427 381 411 374 404 374 398 376 390 381 383 393 380 397 367 402 362 407 359 407 355 402 352 402 342 416 341 421 342 425 345 428 348 430 352 430 357 428 361 427 375 430 383 432 386 432 M690 93 688 102 692 111 M417 229 430 224 433 222 432 220 422 210 M402 212 402 218 404 223 411 229 414 229 417 229 M692 184 673 188 657 184 643 185 636 188 625 196 623 198 624 201 629 207 631 212 633 214 645 214 660 211 665 211 674 215 684 225 692 229 M598 233 600 231 602 227 601 223 599 216 598 212 601 203 605 195 600 191 594 190 590 191 587 193 584 197 583 201 585 204 592 210 593 213 590 221 590 224 593 232 595 233 598 233 M459 222 467 218 469 215 470 212 469 206 462 198 M456 200 455 205 448 210 447 214 449 218 452 221 455 222 459 222 M494 245 497 243 498 241 496 236 493 235 491 236 490 241 491 244 494 245 M692 241 688 235 685 236 680 248 678 255 679 260 685 270 688 273 692 275 M523 276 527 274 529 272 530 266 528 259 524 248 523 238 521 236 511 242 503 244 500 252 494 259 494 262 495 267 502 272 515 276 523 276 M272 299 270 292 M461 321 469 317 476 309 482 297 481 293 478 290 472 289 466 290 457 298 447 302 444 305 443 309 447 314 456 321 461 321 M632 336 634 333 634 329 633 322 631 318 622 312 606 305 600 299 599 299 594 313 595 318 599 323 608 331 614 334 625 337 632 336 M653 347 649 347 648 348 648 351 M471 439 474 437 478 431 483 425 485 420 485 417 480 408 477 392 465 370 460 365 451 360 447 355 445 354 442 357 441 361 443 371 446 384 448 386 454 388 459 393 468 396 472 400 472 403 470 409 472 416 473 425 468 433 466 437 468 439 471 439 M355 439 360 436 364 435 374 435 384 438 389 438 400 435 415 427 437 421 438 420 436 411 439 400 435 388 434 380 431 376 423 373 416 368 398 370 387 375 379 386 376 388 371 390 350 392 346 394 342 398 M336 429 348 439 352 440 355 439 M448 422 453 419 460 418 462 416 462 414 456 411 451 412 442 421 444 422 448 422 M451 445 451 443 450 443 450 445 451 445 M417 236 422 234 430 233 446 228 463 228 476 227 477 224 477 209 471 195 M394 210 398 224 400 229 410 236 414 237 417 236 M677 93 672 114 673 121 675 123 678 124 692 126 M559 89 560 86 560 83 559 81 557 81 555 83 554 87 556 89 559 89 M621 165 625 160 626 149 626 144 623 141 602 136 589 140 587 142 587 144 588 146 605 151 618 165 621 165 M692 179 685 180 673 183 660 180 641 179 635 180 627 185 624 186 618 184 609 185 600 181 596 181 590 183 584 187 574 195 568 203 565 205 561 206 556 202 554 201 M552 205 556 214 558 217 569 225 576 225 584 238 588 240 594 241 598 241 603 235 605 230 608 214 611 209 616 206 621 207 626 215 630 217 646 216 660 213 665 214 669 216 674 220 679 229 679 242 676 255 677 261 684 275 686 277 689 278 M578 219 577 219 576 216 577 214 579 213 580 214 580 216 578 219 M523 280 532 276 535 273 536 270 535 262 532 253 531 233 529 229 521 223 511 222 503 224 493 225 484 229 482 232 482 246 488 264 490 268 502 278 515 281 523 280 M304 331 299 317 291 307 285 295 283 288 283 281 M659 334 654 331 650 325 646 322 631 311 614 302 609 297 604 287 600 282 596 281 591 284 589 289 588 316 594 327 612 341 615 345 616 348 611 356 610 361 612 376 616 388 M462 326 469 323 473 320 480 311 485 301 486 296 485 292 482 288 477 285 471 284 465 284 447 290 444 293 439 302 438 309 438 312 441 315 454 325 458 327 462 326 M373 337 374 333 373 330 369 330 366 332 366 334 369 337 371 338 373 337 M465 459 469 455 481 436 489 424 490 418 488 407 489 398 486 393 475 377 469 367 464 361 457 356 453 348 448 344 440 339 437 339 435 341 434 347 433 350 426 357 417 358 407 365 390 365 385 366 380 370 377 377 374 381 368 383 357 385 M335 436 346 444 354 446 364 442 368 442 375 442 384 444 388 444 402 440 418 432 430 431 436 434 439 440 439 447 436 455 437 457 448 456 454 457 461 459 465 459 M440 509 438 505 424 492 419 492 412 496 410 499 410 502 410 506 412 509 415 510 425 512 433 517 M549 66 544 70 540 75 533 95 531 98 523 103 519 104 505 101 M667 93 667 101 666 106 662 118 658 123 648 132 632 134 614 131 609 128 605 125 601 117 599 98 596 93 M588 81 586 76 580 72 M499 214 489 215 486 214 481 203 480 195 M507 136 512 134 518 136 522 140 525 148 533 154 538 153 553 147 560 147 567 150 581 160 591 165 599 168 597 170 582 178 563 185 551 186 M508 209 499 214 M692 173 675 172 660 174 648 170 636 171 634 170 633 168 635 164 645 153 648 152 658 153 663 152 666 150 671 142 674 139 684 134 692 133 M451 504 437 492 435 481 432 472 433 470 446 463 451 463 463 465 470 462 478 452 483 438 492 428 495 423 494 410 496 400 495 394 492 390 479 377 472 364 463 353 459 340 461 336 474 324 484 311 490 296 491 292 490 289 483 281 475 279 459 280 444 284 441 285 438 289 436 295 432 311 432 315 435 322 435 327 433 329 429 330 425 329 418 325 415 326 414 329 414 332 418 342 417 344 408 348 405 356 403 358 399 359 395 358 383 349 390 336 392 318 389 314 380 310 368 310 363 312 347 339 345 345 M363 346 369 348 375 352 376 355 374 362 M323 325 321 319 320 311 325 293 325 272 M387 209 395 234 398 237 406 241 418 243 439 235 449 233 467 234 472 235 475 240 477 250 482 259 485 270 493 278 497 283 501 284 521 284 547 276 549 275 548 266 543 249 539 243 538 240 539 237 541 234 549 229 554 228 560 230 567 236 573 239 579 249 589 251 600 258 602 257 607 248 606 239 608 228 609 224 612 220 616 219 632 219 647 218 657 216 663 216 667 218 671 221 675 229 677 243 674 256 674 262 680 275 682 286 M651 317 643 312 616 297 613 293 599 270 596 270 589 272 581 279 571 281 569 284 569 286 578 289 582 292 583 306 582 316 585 325 588 329 596 336 602 344 601 354 602 371 605 385 607 409 609 412 612 415 622 419 M490 489 483 485 479 477 477 476 474 477 471 480 470 483 471 489 466 498 M533 169 535 164 534 160 533 158 531 157 528 157 523 161 M559 287 560 286 556 281 554 280 556 285 559 287 M405 329 406 328 406 326 403 325 402 326 403 328 405 329 M334 456 345 458 358 470 361 472 364 472 369 470 375 465 376 462 377 456 379 453 386 453 395 448 404 447 413 443 418 444 425 447 426 450 425 467 421 475 418 478 412 480 397 478 395 479 394 482 396 486 402 494 404 509 408 516 411 519 422 520 430 528 M335 560 341 556 348 547 350 542 349 537 347 531 341 527 335 527 329 530 M530 65 519 75 508 81 M655 93 658 105 657 111 654 117 650 121 645 124 637 128 631 129 617 126 613 123 610 120 607 111 607 93 M692 157 682 158 680 156 680 154 682 149 692 144 M564 174 560 174 557 172 556 170 556 167 558 165 561 163 565 163 569 164 571 166 571 169 568 172 564 174 M497 204 494 204 492 203 490 200 491 197 M414 313 411 313 404 309 371 301 352 300 343 282 341 273 M368 209 378 212 383 216 386 225 387 237 389 242 399 247 408 249 415 252 420 252 427 246 436 241 445 238 455 237 463 238 468 240 471 244 474 252 479 262 479 267 478 271 475 273 465 275 450 275 442 274 439 275 437 277 428 304 425 307 414 313 M654 311 647 306 630 299 620 293 616 289 609 278 607 271 606 265 611 248 610 230 613 225 617 223 657 218 663 219 668 223 672 229 675 242 675 247 672 256 671 265 673 289 M579 269 577 270 576 269 575 265 576 261 578 260 581 260 583 263 582 266 579 269 M501 487 496 485 491 482 489 478 487 470 485 467 480 465 479 462 487 439 490 435 499 429 502 426 502 424 500 415 501 402 500 396 495 386 485 378 480 373 474 360 467 351 466 344 466 340 469 335 490 309 496 295 501 290 506 288 517 287 539 282 544 282 548 285 559 300 575 310 579 329 582 332 589 337 592 341 593 353 596 362 595 380 594 388 598 402 601 424 598 432 593 439 M345 312 343 311 343 307 345 304 348 303 349 305 348 309 345 312 M534 473 538 469 538 465 532 457 529 456 527 456 525 458 524 461 524 468 529 473 532 474 534 473 M409 472 404 471 397 466 395 462 397 458 399 458 402 458 413 465 413 467 413 469 409 472 M333 467 339 470 350 473 359 477 364 478 375 477 381 480 396 496 400 513 404 522 407 524 415 527 421 532 427 535 M455 493 453 492 451 490 449 480 449 477 451 474 454 472 457 472 460 474 460 479 458 487 455 493 M334 577 339 578 343 578 346 576 353 570 364 568 369 569 377 577 381 577 385 576 390 572 392 569 393 566 391 563 389 561 373 554 369 554 363 555 360 553 358 547 359 534 359 529 357 526 348 518 345 517 342 517 330 522 M632 124 627 124 621 122 617 120 614 116 613 112 612 106 613 99 615 93 M644 93 648 99 650 104 650 109 649 113 646 117 643 120 637 123 632 124 M658 302 639 298 632 296 621 289 616 283 612 275 610 264 614 250 614 233 615 229 617 228 637 222 657 221 662 222 668 226 673 238 674 244 664 278 664 281 667 288 668 292 M366 246 362 245 360 242 M366 222 372 223 375 225 377 227 377 231 376 238 366 246 M417 302 405 303 399 302 387 299 367 290 361 286 356 281 355 276 357 271 362 265 372 260 382 253 400 254 416 259 422 260 426 258 436 247 442 243 448 242 457 241 461 242 465 244 468 248 471 256 471 261 470 264 466 267 462 269 439 268 435 270 433 273 432 284 427 294 423 299 417 302 M507 475 503 476 500 475 494 467 486 461 485 457 489 443 491 439 496 436 506 432 510 427 510 423 505 413 504 397 502 391 496 382 485 373 482 370 476 357 471 349 470 345 471 340 474 334 486 318 498 309 499 307 500 299 504 295 513 293 526 288 539 286 543 286 547 290 551 297 552 310 555 312 563 311 568 314 572 319 574 331 585 341 586 346 586 361 588 368 587 387 592 412 591 420 586 427 583 434 M560 455 557 463 555 465 552 465 548 462 542 453 533 447 529 446 526 448 523 451 518 463 516 467 511 473 507 475 M415 560 414 558 413 558 404 557 394 553 382 550 371 543 370 540 370 529 368 520 361 509 355 507 353 504 357 487 361 485 370 485 376 486 381 489 389 498 395 518 399 526 404 530 424 543 M331 498 335 504 334 506 332 507 M633 119 629 120 624 118 620 116 617 112 617 107 618 101 620 96 623 93 M634 93 638 96 641 100 643 104 643 108 643 112 641 115 633 119 M654 294 649 294 637 293 628 289 621 284 615 271 614 262 616 251 617 235 620 232 633 226 643 223 657 223 661 224 667 229 672 240 672 247 668 255 661 275 659 290 657 293 654 294 M452 262 445 263 440 261 440 257 442 250 446 247 451 246 457 246 462 248 465 253 464 257 460 261 452 262 M413 297 404 297 391 293 380 284 375 279 374 275 376 270 379 267 385 264 394 263 402 261 407 262 425 268 427 271 429 276 429 280 428 284 421 294 417 296 413 297 M505 467 501 466 495 462 491 458 490 455 494 444 495 441 499 439 509 436 512 434 515 428 515 422 511 413 507 396 500 382 494 374 485 368 482 363 477 349 477 338 480 331 486 324 492 319 504 312 510 304 521 293 527 290 539 290 543 292 547 299 547 303 543 312 543 316 545 318 554 320 564 320 569 331 578 343 579 365 584 395 584 404 579 415 572 434 564 442 555 448 552 449 534 438 530 437 527 438 523 440 520 444 516 457 514 461 509 465 505 467 M393 545 389 546 385 545 382 543 379 539 379 527 381 522 385 518 389 521 398 537 399 540 398 542 393 545 M632 113 626 113 622 109 622 103 626 99 629 98 632 99 636 104 637 107 636 110 632 113 M650 288 642 286 632 287 627 284 624 281 619 271 618 265 619 242 621 237 633 228 643 225 658 225 662 226 666 230 670 239 671 244 669 248 665 256 655 283 653 287 650 288 M412 292 406 291 398 286 394 281 394 279 395 277 405 272 409 271 417 271 422 274 425 278 424 283 418 289 412 292 M555 438 540 435 522 429 511 396 503 378 496 369 486 363 482 351 482 336 485 330 490 326 502 322 507 317 515 311 524 296 529 293 538 294 541 296 543 300 542 304 534 318 534 324 536 330 538 331 540 331 544 327 548 326 560 328 563 330 566 333 571 341 573 345 573 366 579 394 579 402 573 415 567 431 562 436 555 438 M505 459 501 459 498 457 497 453 497 448 499 445 502 443 507 442 511 442 513 444 514 446 513 452 510 457 505 459 M650 281 647 281 639 278 631 280 628 278 622 269 621 252 624 240 633 231 643 227 658 227 662 229 665 232 669 240 669 244 667 248 658 259 655 275 653 279 650 281 M412 285 409 286 407 284 406 281 408 279 413 278 416 280 415 283 412 285 M530 311 527 312 525 311 524 309 524 306 527 299 530 298 533 298 537 300 537 303 534 308 530 311 M557 432 551 433 537 430 529 427 525 423 522 417 519 407 510 387 509 382 509 370 517 358 518 354 514 352 511 352 506 357 504 362 502 363 499 363 491 358 488 354 486 349 487 337 490 333 498 329 505 329 510 331 519 339 530 341 547 347 551 346 556 341 559 339 563 340 567 344 568 349 567 357 567 363 573 385 575 400 574 404 569 413 564 427 562 430 557 432 M650 275 647 276 640 274 632 273 629 272 626 267 623 253 627 241 635 232 644 229 658 229 661 230 664 233 667 240 667 244 665 248 656 254 654 256 653 261 653 270 652 273 650 275 M503 343 500 343 497 340 497 337 500 334 503 334 505 337 505 340 503 343 M556 428 552 429 545 428 535 425 529 421 526 417 523 406 518 398 513 385 513 378 515 371 521 363 530 358 533 351 534 350 538 350 546 354 554 353 558 355 560 358 562 367 567 377 570 389 569 399 561 423 559 426 556 428 M647 269 637 269 631 267 628 262 627 254 629 251 633 249 632 244 632 241 634 237 637 234 646 231 659 231 662 233 664 236 666 241 666 244 662 248 655 251 652 253 647 269 M553 424 549 424 543 423 531 416 529 413 526 403 520 395 516 385 516 381 516 377 522 368 525 365 533 362 538 359 553 360 555 362 556 369 562 376 565 384 565 393 559 416 556 422 553 424 M659 247 652 247 645 244 639 243 637 242 637 239 638 237 641 235 654 233 659 234 663 237 664 242 663 245 659 247 M639 264 636 264 634 263 633 260 633 258 638 256 645 256 645 258 643 261 639 264 M551 419 548 420 543 419 534 412 529 401 522 391 520 384 520 379 523 372 528 368 538 365 544 366 548 368 557 376 559 379 561 387 561 392 553 416 551 419 M660 244 656 245 653 243 651 240 652 237 656 235 660 237 662 241 660 244 M543 406 540 406 537 403 528 389 528 376 531 373 537 371 543 372 552 378 555 382 557 388 557 393 553 400 543 406 M543 396 541 396 539 394 538 389 539 384 543 382 548 385 551 389 549 393 543 396"/>
<path fill="none" stroke="#000" stroke-width="1" shape-rendering="crispEdges" transform="translate(-2 -1)" d="M374.0 235.0 375.0 234.7 377.0 234.1 380.0 233.1 384.0 231.9 388.6 230.9 393.9 230.1 399.8 229.6 406.2 229.4 411.4 228.4 415.3 226.8 417.9 224.5 419.1 221.5 420.2 218.8 421.2 216.2 422.1 214.0 422.9 212.0 424.4 210.4 426.6 209.3 429.6 208.6 433.4 208.4 436.6 209.0 439.2 210.5 441.2 212.9 442.8 216.1 445.1 218.8 448.4 220.8 452.5 222.1 457.5 222.9 462.6 223.7 467.7 224.6 472.9 225.5 478.1 226.5 482.1 227.2 484.7 227.8 486.0 228.0 M377.0 277.0 377.8 277.2 379.4 277.6 381.9 278.1 385.1 278.9 388.4 279.8 391.6 280.9 394.9 282.2 398.1 283.8 401.6 285.0 405.2 286.0 409.0 286.8 413.0 287.2 416.6 286.8 419.9 285.2 422.8 282.8 425.2 279.2 427.2 275.7 428.6 272.1 429.4 268.4 429.6 264.6 429.6 260.8 429.2 256.9 428.5 253.0 427.5 249.0 427.2 245.6 427.8 242.9 429.0 240.8 431.0 239.2 433.2 237.9 435.6 236.6 438.1 235.5 440.9 234.5 442.9 233.8 444.3 233.2 445.0 233.0 M489.0 237.0 488.8 237.9 488.4 239.6 487.9 242.2 487.1 245.8 486.2 249.2 485.2 252.6 484.1 255.9 482.9 259.1 481.3 262.4 479.4 265.6 477.2 268.9 474.8 272.1 472.7 275.4 471.1 278.6 469.9 281.9 469.1 285.1 468.8 288.6 468.9 292.2 469.5 296.0 470.5 300.0 471.6 303.9 472.9 307.8 474.2 311.6 475.8 315.4 477.2 319.2 478.8 323.1 480.2 327.0 481.8 331.0 483.0 335.0 484.0 339.0 484.8 343.0 485.2 347.0 485.9 350.8 486.8 354.4 487.9 357.9 489.1 361.1 490.6 363.4 492.2 364.6 494.0 364.9 496.0 364.1 498.3 363.6 500.9 363.2 503.9 363.0 507.1 363.0 510.7 363.2 514.6 363.6 518.8 364.1 523.2 364.9 526.6 365.4 528.9 365.8 530.0 366.0 M382.0 306.0 383.0 306.3 385.0 306.9 388.0 307.9 392.0 309.1 396.1 310.4 400.4 311.6 404.8 312.9 409.2 314.1 412.8 315.4 415.4 316.6 417.1 317.9 417.9 319.1 417.2 320.1 415.2 320.7 411.9 321.0 407.1 321.0 402.4 321.2 397.8 321.6 393.2 322.1 388.8 322.9 384.8 324.2 381.2 326.2 378.2 328.9 375.8 332.1 374.0 335.9 373.0 340.1 372.8 344.9 373.2 350.1 374.8 354.7 377.2 358.6 380.8 361.8 385.2 364.2 389.4 366.1 393.3 367.4 396.9 368.0 400.1 368.0 402.9 367.1 405.3 365.2 407.2 362.4 408.8 358.6 409.5 355.3 409.5 352.4 408.8 350.0 407.2 348.0 406.1 346.5 405.4 345.5 405.0 345.0 M413.0 368.0 408.0 386.0 M517.0 220.0 528.0 217.0 M518.0 215.0 518.5 215.2 519.5 215.6 521.0 216.1 523.0 216.9 524.7 218.2 526.1 220.2 527.1 222.9 527.9 226.1 528.8 229.9 529.8 234.1 530.9 238.9 532.1 244.1 533.4 248.9 534.6 253.1 535.9 256.9 537.1 260.1 538.7 262.9 540.6 265.1 542.8 266.9 545.2 268.1 547.8 268.9 550.4 269.3 553.1 269.2 555.9 268.8 557.9 268.4 559.3 268.1 560.0 268.0 M552.0 179.0 552.8 179.1 554.4 179.2 556.9 179.4 560.1 179.6 563.1 180.4 565.7 181.6 568.0 183.4 570.0 185.6 571.8 188.3 573.4 191.4 574.9 195.0 576.1 199.0 577.2 202.8 578.2 206.4 579.1 209.9 579.9 213.1 580.1 216.4 579.9 219.6 579.1 222.9 577.9 226.1 577.1 229.4 576.7 232.6 576.8 235.9 577.2 239.1 578.3 242.2 579.9 245.2 582.1 248.1 584.9 250.9 587.6 252.8 590.2 253.8 592.8 253.9 595.2 253.1 597.4 252.1 599.3 250.7 600.9 249.0 602.1 247.0 603.1 245.5 603.7 244.5 604.0 244.0 M596.0 262.0 595.6 262.7 594.7 264.1 593.4 266.1 591.6 268.9 590.3 272.1 589.4 275.7 589.0 279.8 589.0 284.2 589.1 288.6 589.4 292.9 589.8 297.0 590.2 301.0 591.4 304.1 593.3 306.4 595.9 307.8 599.1 308.2 602.9 308.9 607.1 309.6 611.9 310.5 617.1 311.5 621.6 311.5 625.2 310.5 628.0 308.5 630.0 305.5 631.6 301.8 632.9 297.4 633.8 292.4 634.2 286.6 634.3 281.3 633.9 276.4 633.1 272.0 631.9 268.0 629.6 264.9 626.4 262.6 622.1 261.2 616.9 260.8 612.1 260.5 607.9 260.5 604.1 260.8 600.9 261.2 598.4 261.6 596.8 261.9 596.0 262.0 M523.0 288.0 524.0 287.7 526.0 287.1 529.0 286.1 533.0 284.9 536.3 284.8 538.9 285.8 540.9 287.9 542.1 291.1 542.4 294.2 541.8 297.2 540.2 300.1 537.8 302.9 535.3 304.6 532.9 305.2 530.6 304.8 528.4 303.2 526.6 301.3 525.2 298.9 524.2 296.1 523.8 292.9 523.4 290.4 523.1 288.8 523.0 288.0 M648.0 270.0 648.5 271.0 649.5 273.0 651.0 276.0 653.0 280.0 655.5 282.8 658.5 284.4 662.0 284.9 666.0 284.1 669.5 282.8 672.5 280.8 675.0 278.1 677.0 274.9 678.9 272.1 680.8 269.9 682.6 268.1 684.4 266.9 685.7 265.9 686.6 265.3 687.0 265.0 M599.0 215.0 599.6 214.9 600.9 214.6 602.8 214.2 605.2 213.8 607.8 214.2 610.4 215.6 613.1 217.9 615.9 221.1 618.9 223.9 622.1 226.1 625.6 227.9 629.4 229.1 632.6 228.8 635.2 226.8 637.2 223.1 638.8 217.9 639.9 213.9 640.6 211.3 641.0 210.0 M539.0 327.0 539.6 327.4 540.9 328.1 542.8 329.2 545.2 330.8 547.9 332.5 550.8 334.5 553.9 336.8 557.1 339.2 560.2 341.9 563.2 344.8 566.1 347.9 568.9 351.1 570.9 353.6 572.3 355.2 573.0 356.0 M374.0 346.0 374.2 347.1 374.6 349.4 375.1 352.8 375.9 357.2 376.8 361.7 377.9 366.1 379.2 370.4 380.8 374.6 381.7 379.3 382.1 384.4 381.9 390.0 381.1 396.0 380.2 401.6 379.1 406.7 377.8 411.4 376.2 415.6 374.2 419.6 371.6 423.2 368.4 426.5 364.6 429.5 360.4 432.1 355.6 434.4 350.4 436.2 344.6 437.8 340.3 438.9 337.4 439.6 336.0 440.0 M406.0 346.0 406.4 346.9 407.1 348.8 408.2 351.6 409.8 355.4 410.5 359.1 410.5 362.7 409.8 366.2 408.2 369.8 406.6 372.9 404.7 375.8 402.6 378.4 400.4 380.6 398.7 382.3 397.6 383.4 397.0 384.0 M421.0 387.0 422.6 386.8 425.9 386.4 430.8 385.9 437.2 385.1 443.2 384.6 448.8 384.2 453.8 384.0 458.2 384.0 462.5 383.2 466.5 381.8 470.2 379.5 473.8 376.5 476.9 373.8 479.8 371.2 482.4 369.0 484.6 367.0 487.6 365.5 491.4 364.5 495.9 364.0 501.1 364.0 505.6 364.0 509.4 364.0 512.4 364.0 514.6 364.0 517.8 363.4 521.8 362.3 526.6 360.6 532.4 358.4 536.7 357.6 539.6 358.2 541.0 360.2 541.0 363.8 541.8 366.8 543.2 369.2 545.5 371.2 548.5 372.8 552.0 373.7 556.0 374.1 560.5 373.9 565.5 373.1 569.2 371.7 571.8 369.6 573.0 366.8 573.0 363.2 572.6 359.9 571.9 356.6 570.8 353.5 569.2 350.5 568.1 348.2 567.4 346.8 567.0 346.0 M421.0 387.0 421.2 388.1 421.6 390.4 422.1 393.8 422.9 398.2 423.2 402.9 423.2 407.6 422.9 412.5 422.1 417.5 420.6 422.2 418.4 426.6 415.4 430.6 411.6 434.4 408.8 437.8 406.9 440.8 406.0 443.4 406.0 445.6 406.8 447.6 408.2 449.4 410.5 450.9 413.5 452.1 416.7 453.4 420.1 454.8 423.6 456.2 427.4 457.8 431.4 458.7 435.8 459.1 440.5 458.9 445.5 458.1 450.4 457.1 455.1 455.7 459.8 454.0 464.2 452.0 468.9 450.3 473.6 448.9 478.5 447.9 483.5 447.1 487.4 447.4 490.3 448.8 492.1 451.2 492.9 454.8 493.1 458.3 492.7 461.9 491.8 465.6 490.2 469.4 488.6 472.9 486.7 476.3 484.6 479.5 482.4 482.5 480.7 484.8 479.6 486.2 479.0 487.0 M479.0 375.0 479.2 376.5 479.6 379.5 480.1 384.0 480.9 390.0 482.2 395.6 484.1 400.7 486.5 405.4 489.5 409.6 492.5 413.8 495.5 417.8 498.5 421.6 501.5 425.4 504.6 428.8 507.9 431.8 511.2 434.4 514.8 436.6 517.9 439.2 520.8 442.1 523.4 445.2 525.6 448.8 527.7 452.5 529.6 456.5 531.2 460.8 532.8 465.2 533.9 468.6 534.6 470.9 535.0 472.0 M523.0 393.0 524.1 392.8 526.4 392.4 529.8 391.9 534.2 391.1 539.1 390.9 544.2 391.3 549.6 392.2 555.4 393.8 560.2 395.4 564.2 397.3 567.4 399.4 569.6 401.6 571.5 404.0 573.0 406.5 574.1 409.1 574.9 411.9 575.8 414.7 576.9 417.6 578.2 420.5 579.8 423.5 580.9 425.8 581.6 427.2 582.0 428.0 M579.0 407.0 579.9 406.9 581.8 406.6 584.6 406.2 588.4 405.8 592.1 405.9 595.7 406.6 599.2 408.0 602.8 410.0 606.1 411.7 609.4 413.1 612.5 414.1 615.5 414.9 617.8 415.4 619.2 415.8 620.0 416.0 M361.0 569.0 360.4 569.3 359.3 569.9 357.6 570.9 355.4 572.1 353.2 573.3 351.2 574.4 349.4 575.5 347.6 576.5 346.3 577.2 345.4 577.8 345.0 578.0 M361.0 569.0 361.7 569.3 363.1 569.9 365.1 570.9 367.9 572.1 370.4 573.5 372.8 575.0 375.0 576.6 377.0 578.4 378.5 579.7 379.5 580.6 380.0 581.0"/>
<path fill="none" stroke="#f00000" stroke-width="1" d="M374.0 235.0 375.0 234.7 377.0 234.1 380.0 233.1 384.0 231.9 388.6 230.9 393.9 230.1 399.8 229.6 406.2 229.4 411.4 228.4 415.3 226.8 417.9 224.5 419.1 221.5 420.2 218.8 421.2 216.2 422.1 214.0 422.9 212.0 424.4 210.4 426.6 209.3 429.6 208.6 433.4 208.4 436.6 209.0 439.2 210.5 441.2 212.9 442.8 216.1 445.1 218.8 448.4 220.8 452.5 222.1 457.5 222.9 462.6 223.7 467.7 224.6 472.9 225.5 478.1 226.5 482.1 227.2 484.7 227.8 486.0 228.0 M377.0 277.0 377.8 277.2 379.4 277.6 381.9 278.1 385.1 278.9 388.4 279.8 391.6 280.9 394.9 282.2 398.1 283.8 401.6 285.0 405.2 286.0 409.0 286.8 413.0 287.2 416.6 286.8 419.9 285.2 422.8 282.8 425.2 279.2 427.2 275.7 428.6 272.1 429.4 268.4 429.6 264.6 429.6 260.8 429.2 256.9 428.5 253.0 427.5 249.0 427.2 245.6 427.8 242.9 429.0 240.8 431.0 239.2 433.2 237.9 435.6 236.6 438.1 235.5 440.9 234.5 442.9 233.8 444.3 233.2 445.0 233.0 M489.0 237.0 488.8 237.9 488.4 239.6 487.9 242.2 487.1 245.8 486.2 249.2 485.2 252.6 484.1 255.9 482.9 259.1 481.3 262.4 479.4 265.6 477.2 268.9 474.8 272.1 472.7 275.4 471.1 278.6 469.9 281.9 469.1 285.1 468.8 288.6 468.9 292.2 469.5 296.0 470.5 300.0 471.6 303.9 472.9 307.8 474.2 311.6 475.8 315.4 477.2 319.2 478.8 323.1 480.2 327.0 481.8 331.0 483.0 335.0 484.0 339.0 484.8 343.0 485.2 347.0 485.9 350.8 486.8 354.4 487.9 357.9 489.1 361.1 490.6 363.4 492.2 364.6 494.0 364.9 496.0 364.1 498.3 363.6 500.9 363.2 503.9 363.0 507.1 363.0 510.7 363.2 514.6 363.6 518.8 364.1 523.2 364.9 526.6 365.4 528.9 365.8 530.0 366.0 M382.0 306.0 383.0 306.3 385.0 306.9 388.0 307.9 392.0 309.1 396.1 310.4 400.4 311.6 404.8 312.9 409.2 314.1 412.8 315.4 415.4 316.6 417.1 317.9 417.9 319.1 417.2 320.1 415.2 320.7 411.9 321.0 407.1 321.0 402.4 321.2 397.8 321.6 393.2 322.1 388.8 322.9 384.8 324.2 381.2 326.2 378.2 328.9 375.8 332.1 374.0 335.9 373.0 340.1 372.8 344.9 373.2 350.1 374.8 354.7 377.2 358.6 380.8 361.8 385.2 364.2 389.4 366.1 393.3 367.4 396.9 368.0 400.1 368.0 402.9 367.1 405.3 365.2 407.2 362.4 408.8 358.6 409.5 355.3 409.5 352.4 408.8 350.0 407.2 348.0 406.1 346.5 405.4 345.5 405.0 345.0 M413.0 368.0 408.0 386.0 M517.0 220.0 528.0 217.0 M518.0 215.0 518.5 215.2 519.5 215.6 521.0 216.1 523.0 216.9 524.7 218.2 526.1 220.2 527.1 222.9 527.9 226.1 528.8 229.9 529.8 234.1 530.9 238.9 532.1 244.1 533.4 248.9 534.6 253.1 535.9 256.9 537.1 260.1 538.7 262.9 540.6 265.1 542.8 266.9 545.2 268.1 547.8 268.9 550.4 269.3 553.1 269.2 555.9 268.8 557.9 268.4 559.3 268.1 560.0 268.0 M552.0 179.0 552.8 179.1 554.4 179.2 556.9 179.4 560.1 179.6 563.1 180.4 565.7 181.6 568.0 183.4 570.0 185.6 571.8 188.3 573.4 191.4 574.9 195.0 576.1 199.0 577.2 202.8 578.2 206.4 579.1 209.9 579.9 213.1 580.1 216.4 579.9 219.6 579.1 222.9 577.9 226.1 577.1 229.4 576.7 232.6 576.8 235.9 577.2 239.1 578.3 242.2 579.9 245.2 582.1 248.1 584.9 250.9 587.6 252.8 590.2 253.8 592.8 253.9 595.2 253.1 597.4 252.1 599.3 250.7 600.9 249.0 602.1 247.0 603.1 245.5 603.7 244.5 604.0 244.0 M596.0 262.0 595.6 262.7 594.7 264.1 593.4 266.1 591.6 268.9 590.3 272.1 589.4 275.7 589.0 279.8 589.0 284.2 589.1 288.6 589.4 292.9 589.8 297.0 590.2 301.0 591.4 304.1 593.3 306.4 595.9 307.8 599.1 308.2 602.9 308.9 607.1 309.6 611.9 310.5 617.1 311.5 621.6 311.5 625.2 310.5 628.0 308.5 630.0 305.5 631.6 301.8 632.9 297.4 633.8 292.4 634.2 286.6 634.3 281.3 633.9 276.4 633.1 272.0 631.9 268.0 629.6 264.9 626.4 262.6 622.1 261.2 616.9 260.8 612.1 260.5 607.9 260.5 604.1 260.8 600.9 261.2 598.4 261.6 596.8 261.9 596.0 262.0 M523.0 288.0 524.0 287.7 526.0 287.1 529.0 286.1 533.0 284.9 536.3 284.8 538.9 285.8 540.9 287.9 542.1 291.1 542.4 294.2 541.8 297.2 540.2 300.1 537.8 302.9 535.3 304.6 532.9 305.2 530.6 304.8 528.4 303.2 526.6 301.3 525.2 298.9 524.2 296.1 523.8 292.9 523.4 290.4 523.1 288.8 523.0 288.0 M648.0 270.0 648.5 271.0 649.5 273.0 651.0 276.0 653.0 280.0 655.5 282.8 658.5 284.4 662.0 284.9 666.0 284.1 669.5 282.8 672.5 280.8 675.0 278.1 677.0 274.9 678.9 272.1 680.8 269.9 682.6 268.1 684.4 266.9 685.7 265.9 686.6 265.3 687.0 265.0 M599.0 215.0 599.6 214.9 600.9 214.6 602.8 214.2 605.2 213.8 607.8 214.2 610.4 215.6 613.1 217.9 615.9 221.1 618.9 223.9 622.1 226.1 625.6 227.9 629.4 229.1 632.6 228.8 635.2 226.8 637.2 223.1 638.8 217.9 639.9 213.9 640.6 211.3 641.0 210.0 M539.0 327.0 539.6 327.4 540.9 328.1 542.8 329.2 545.2 330.8 547.9 332.5 550.8 334.5 553.9 336.8 557.1 339.2 560.2 341.9 563.2 344.8 566.1 347.9 568.9 351.1 570.9 353.6 572.3 355.2 573.0 356.0 M374.0 346.0 374.2 347.1 374.6 349.4 375.1 352.8 375.9 357.2 376.8 361.7 377.9 366.1 379.2 370.4 380.8 374.6 381.7 379.3 382.1 384.4 381.9 390.0 381.1 396.0 380.2 401.6 379.1 406.7 377.8 411.4 376.2 415.6 374.2 419.6 371.6 423.2 368.4 426.5 364.6 429.5 360.4 432.1 355.6 434.4 350.4 436.2 344.6 437.8 340.3 438.9 337.4 439.6 336.0 440.0 M406.0 346.0 406.4 346.9 407.1 348.8 408.2 351.6 409.8 355.4 410.5 359.1 410.5 362.7 409.8 366.2 408.2 369.8 406.6 372.9 404.7 375.8 402.6 378.4 400.4 380.6 398.7 382.3 397.6 383.4 397.0 384.0 M421.0 387.0 422.6 386.8 425.9 386.4 430.8 385.9 437.2 385.1 443.2 384.6 448.8 384.2 453.8 384.0 458.2 384.0 462.5 383.2 466.5 381.8 470.2 379.5 473.8 376.5 476.9 373.8 479.8 371.2 482.4 369.0 484.6 367.0 487.6 365.5 491.4 364.5 495.9 364.0 501.1 364.0 505.6 364.0 509.4 364.0 512.4 364.0 514.6 364.0 517.8 363.4 521.8 362.3 526.6 360.6 532.4 358.4 536.7 357.6 539.6 358.2 541.0 360.2 541.0 363.8 541.8 366.8 543.2 369.2 545.5 371.2 548.5 372.8 552.0 373.7 556.0 374.1 560.5 373.9 565.5 373.1 569.2 371.7 571.8 369.6 573.0 366.8 573.0 363.2 572.6 359.9 571.9 356.6 570.8 353.5 569.2 350.5 568.1 348.2 567.4 346.8 567.0 346.0 M421.0 387.0 421.2 388.1 421.6 390.4 422.1 393.8 422.9 398.2 423.2 402.9 423.2 407.6 422.9 412.5 422.1 417.5 420.6 422.2 418.4 426.6 415.4 430.6 411.6 434.4 408.8 437.8 406.9 440.8 406.0 443.4 406.0 445.6 406.8 447.6 408.2 449.4 410.5 450.9 413.5 452.1 416.7 453.4 420.1 454.8 423.6 456.2 427.4 457.8 431.4 458.7 435.8 459.1 440.5 458.9 445.5 458.1 450.4 457.1 455.1 455.7 459.8 454.0 464.2 452.0 468.9 450.3 473.6 448.9 478.5 447.9 483.5 447.1 487.4 447.4 490.3 448.8 492.1 451.2 492.9 454.8 493.1 458.3 492.7 461.9 491.8 465.6 490.2 469.4 488.6 472.9 486.7 476.3 484.6 479.5 482.4 482.5 480.7 484.8 479.6 486.2 479.0 487.0 M479.0 375.0 479.2 376.5 479.6 379.5 480.1 384.0 480.9 390.0 482.2 395.6 484.1 400.7 486.5 405.4 489.5 409.6 492.5 413.8 495.5 417.8 498.5 421.6 501.5 425.4 504.6 428.8 507.9 431.8 511.2 434.4 514.8 436.6 517.9 439.2 520.8 442.1 523.4 445.2 525.6 448.8 527.7 452.5 529.6 456.5 531.2 460.8 532.8 465.2 533.9 468.6 534.6 470.9 535.0 472.0 M523.0 393.0 524.1 392.8 526.4 392.4 529.8 391.9 534.2 391.1 539.1 390.9 544.2 391.3 549.6 392.2 555.4 393.8 560.2 395.4 564.2 397.3 567.4 399.4 569.6 401.6 571.5 404.0 573.0 406.5 574.1 409.1 574.9 411.9 575.8 414.7 576.9 417.6 578.2 420.5 579.8 423.5 580.9 425.8 581.6 427.2 582.0 428.0 M579.0 407.0 579.9 406.9 581.8 406.6 584.6 406.2 588.4 405.8 592.1 405.9 595.7 406.6 599.2 408.0 602.8 410.0 606.1 411.7 609.4 413.1 612.5 414.1 615.5 414.9 617.8 415.4 619.2 415.8 620.0 416.0 M361.0 569.0 360.4 569.3 359.3 569.9 357.6 570.9 355.4 572.1 353.2 573.3 351.2 574.4 349.4 575.5 347.6 576.5 346.3 577.2 345.4 577.8 345.0 578.0 M361.0 569.0 361.7 569.3 363.1 569.9 365.1 570.9 367.9 572.1 370.4 573.5 372.8 575.0 375.0 576.6 377.0 578.4 378.5 579.7 379.5 580.6 380.0 581.0"/>
<path fill="none" stroke="#f00000" stroke-width="4" stroke-dasharray="1 7" transform="translate(1 1)" d="M374.0 235.0 375.0 234.7 377.0 234.1 380.0 233.1 384.0 231.9 388.6 230.9 393.9 230.1 399.8 229.6 406.2 229.4 411.4 228.4 415.3 226.8 417.9 224.5 419.1 221.5 420.2 218.8 421.2 216.2 422.1 214.0 422.9 212.0 424.4 210.4 426.6 209.3 429.6 208.6 433.4 208.4 436.6 209.0 439.2 210.5 441.2 212.9 442.8 216.1 445.1 218.8 448.4 220.8 452.5 222.1 457.5 222.9 462.6 223.7 467.7 224.6 472.9 225.5 478.1 226.5 482.1 227.2 484.7 227.8 486.0 228.0 M377.0 277.0 377.8 277.2 379.4 277.6 381.9 278.1 385.1 278.9 388.4 279.8 391.6 280.9 394.9 282.2 398.1 283.8 401.6 285.0 405.2 286.0 409.0 286.8 413.0 287.2 416.6 286.8 419.9 285.2 422.8 282.8 425.2 279.2 427.2 275.7 428.6 272.1 429.4 268.4 429.6 264.6 429.6 260.8 429.2 256.9 428.5 253.0 427.5 249.0 427.2 245.6 427.8 242.9 429.0 240.8 431.0 239.2 433.2 237.9 435.6 236.6 438.1 235.5 440.9 234.5 442.9 233.8 444.3 233.2 445.0 233.0 M489.0 237.0 488.8 237.9 488.4 239.6 487.9 242.2 487.1 245.8 486.2 249.2 485.2 252.6 484.1 255.9 482.9 259.1 481.3 262.4 479.4 265.6 477.2 268.9 474.8 272.1 472.7 275.4 471.1 278.6 469.9 281.9 469.1 285.1 468.8 288.6 468.9 292.2 469.5 296.0 470.5 300.0 471.6 303.9 472.9 307.8 474.2 311.6 475.8 315.4 477.2 319.2 478.8 323.1 480.2 327.0 481.8 331.0 483.0 335.0 484.0 339.0 484.8 343.0 485.2 347.0 485.9 350.8 486.8 354.4 487.9 357.9 489.1 361.1 490.6 363.4 492.2 364.6 494.0 364.9 496.0 364.1 498.3 363.6 500.9 363.2 503.9 363.0 507.1 363.0 510.7 363.2 514.6 363.6 518.8 364.1 523.2 364.9 526.6 365.4 528.9 365.8 530.0 366.0 M382.0 306.0 383.0 306.3 385.0 306.9 388.0 307.9 392.0 309.1 396.1 310.4 400.4 311.6 404.8 312.9 409.2 314.1 412.8 315.4 415.4 316.6 417.1 317.9 417.9 319.1 417.2 320.1 415.2 320.7 411.9 321.0 407.1 321.0 402.4 321.2 397.8 321.6 393.2 322.1 388.8 322.9 384.8 324.2 381.2 326.2 378.2 328.9 375.8 332.1 374.0 335.9 373.0 340.1 372.8 344.9 373.2 350.1 374.8 354.7 377.2 358.6 380.8 361.8 385.2 364.2 389.4 366.1 393.3 367.4 396.9 368.0 400.1 368.0 402.9 367.1 405.3 365.2 407.2 362.4 408.8 358.6 409.5 355.3 409.5 352.4 408.8 350.0 407.2 348.0 406.1 346.5 405.4 345.5 405.0 345.0 M413.0 368.0 408.0 386.0 M517.0 220.0 528.0 217.0 M518.0 215.0 518.5 215.2 519.5 215.6 521.0 216.1 523.0 216.9 524.7 218.2 526.1 220.2 527.1 222.9 527.9 226.1 528.8 229.9 529.8 234.1 530.9 238.9 532.1 244.1 533.4 248.9 534.6 253.1 535.9 256.9 537.1 260.1 538.7 262.9 540.6 265.1 542.8 266.9 545.2 268.1 547.8 268.9 550.4 269.3 553.1 269.2 555.9 268.8 557.9 268.4 559.3 268.1 560.0 268.0 M552.0 179.0 552.8 179.1 554.4 179.2 556.9 179.4 560.1 179.6 563.1 180.4 565.7 181.6 568.0 183.4 570.0 185.6 571.8 188.3 573.4 191.4 574.9 195.0 576.1 199.0 577.2 202.8 578.2 206.4 579.1 209.9 579.9 213.1 580.1 216.4 579.9 219.6 579.1 222.9 577.9 226.1 577.1 229.4 576.7 232.6 576.8 235.9 577.2 239.1 578.3 242.2 579.9 245.2 582.1 248.1 584.9 250.9 587.6 252.8 590.2 253.8 592.8 253.9 595.2 253.1 597.4 252.1 599.3 250.7 600.9 249.0 602.1 247.0 603.1 245.5 603.7 244.5 604.0 244.0 M596.0 262.0 595.6 262.7 594.7 264.1 593.4 266.1 591.6 268.9 590.3 272.1 589.4 275.7 589.0 279.8 589.0 284.2 589.1 288.6 589.4 292.9 589.8 297.0 590.2 301.0 591.4 304.1 593.3 306.4 595.9 307.8 599.1 308.2 602.9 308.9 607.1 309.6 611.9 310.5 617.1 311.5 621.6 311.5 625.2 310.5 628.0 308.5 630.0 305.5 631.6 301.8 632.9 297.4 633.8 292.4 634.2 286.6 634.3 281.3 633.9 276.4 633.1 272.0 631.9 268.0 629.6 264.9 626.4 262.6 622.1 261.2 616.9 260.8 612.1 260.5 607.9 260.5 604.1 260.8 600.9 261.2 598.4 261.6 596.8 261.9 596.0 262.0 M523.0 288.0 524.0 287.7 526.0 287.1 529.0 286.1 533.0 284.9 536.3 284.8 538.9 285.8 540.9 287.9 542.1 291.1 542.4 294.2 541.8 297.2 540.2 300.1 537.8 302.9 535.3 304.6 532.9 305.2 530.6 304.8 528.4 303.2 526.6 301.3 525.2 298.9 524.2 296.1 523.8 292.9 523.4 290.4 523.1 288.8 523.0 288.0 M648.0 270.0 648.5 271.0 649.5 273.0 651.0 276.0 653.0 280.0 655.5 282.8 658.5 284.4 662.0 284.9 666.0 284.1 669.5 282.8 672.5 280.8 675.0 278.1 677.0 274.9 678.9 272.1 680.8 269.9 682.6 268.1 684.4 266.9 685.7 265.9 686.6 265.3 687.0 265.0 M599.0 215.0 599.6 214.9 600.9 214.6 602.8 214.2 605.2 213.8 607.8 214.2 610.4 215.6 613.1 217.9 615.9 221.1 618.9 223.9 622.1 226.1 625.6 227.9 629.4 229.1 632.6 228.8 635.2 226.8 637.2 223.1 638.8 217.9 639.9 213.9 640.6 211.3 641.0 210.0 M539.0 327.0 539.6 327.4 540.9 328.1 542.8 329.2 545.2 330.8 547.9 332.5 550.8 334.5 553.9 336.8 557.1 339.2 560.2 341.9 563.2 344.8 566.1 347.9 568.9 351.1 570.9 353.6 572.3 355.2 573.0 356.0 M374.0 346.0 374.2 347.1 374.6 349.4 375.1 352.8 375.9 357.2 376.8 361.7 377.9 366.1 379.2 370.4 380.8 374.6 381.7 379.3 382.1 384.4 381.9 390.0 381.1 396.0 380.2 401.6 379.1 406.7 377.8 411.4 376.2 415.6 374.2 419.6 371.6 423.2 368.4 426.5 364.6 429.5 360.4 432.1 355.6 434.4 350.4 436.2 344.6 437.8 340.3 438.9 337.4 439.6 336.0 440.0 M406.0 346.0 406.4 346.9 407.1 348.8 408.2 351.6 409.8 355.4 410.5 359.1 410.5 362.7 409.8 366.2 408.2 369.8 406.6 372.9 404.7 375.8 402.6 378.4 400.4 380.6 398.7 382.3 397.6 383.4 397.0 384.0 M421.0 387.0 422.6 386.8 425.9 386.4 430.8 385.9 437.2 385.1 443.2 384.6 448.8 384.2 453.8 384.0 458.2 384.0 462.5 383.2 466.5 381.8 470.2 379.5 473.8 376.5 476.9 373.8 479.8 371.2 482.4 369.0 484.6 367.0 487.6 365.5 491.4 364.5 495.9 364.0 501.1 364.0 505.6 364.0 509.4 364.0 512.4 364.0 514.6 364.0 517.8 363.4 521.8 362.3 526.6 360.6 532.4 358.4 536.7 357.6 539.6 358.2 541.0 360.2 541.0 363.8 541.8 366.8 543.2 369.2 545.5 371.2 548.5 372.8 552.0 373.7 556.0 374.1 560.5 373.9 565.5 373.1 569.2 371.7 571.8 369.6 573.0 366.8 573.0 363.2 572.6 359.9 571.9 356.6 570.8 353.5 569.2 350.5 568.1 348.2 567.4 346.8 567.0 346.0 M421.0 387.0 421.2 388.1 421.6 390.4 422.1 393.8 422.9 398.2 423.2 402.9 423.2 407.6 422.9 412.5 422.1 417.5 420.6 422.2 418.4 426.6 415.4 430.6 411.6 434.4 408.8 437.8 406.9 440.8 406.0 443.4 406.0 445.6 406.8 447.6 408.2 449.4 410.5 450.9 413.5 452.1 416.7 453.4 420.1 454.8 423.6 456.2 427.4 457.8 431.4 458.7 435.8 459.1 440.5 458.9 445.5 458.1 450.4 457.1 455.1 455.7 459.8 454.0 464.2 452.0 468.9 450.3 473.6 448.9 478.5 447.9 483.5 447.1 487.4 447.4 490.3 448.8 492.1 451.2 492.9 454.8 493.1 458.3 492.7 461.9 491.8 465.6 490.2 469.4 488.6 472.9 486.7 476.3 484.6 479.5 482.4 482.5 480.7 484.8 479.6 486.2 479.0 487.0 M479.0 375.0 479.2 376.5 479.6 379.5 480.1 384.0 480.9 390.0 482.2 395.6 484.1 400.7 486.5 405.4 489.5 409.6 492.5 413.8 495.5 417.8 498.5 421.6 501.5 425.4 504.6 428.8 507.9 431.8 511.2 434.4 514.8 436.6 517.9 439.2 520.8 442.1 523.4 445.2 525.6 448.8 527.7 452.5 529.6 456.5 531.2 460.8 532.8 465.2 533.9 468.6 534.6 470.9 535.0 472.0 M523.0 393.0 524.1 392.8 526.4 392.4 529.8 391.9 534.2 391.1 539.1 390.9 544.2 391.3 549.6 392.2 555.4 393.8 560.2 395.4 564.2 397.3 567.4 399.4 569.6 401.6 571.5 404.0 573.0 406.5 574.1 409.1 574.9 411.9 575.8 414.7 576.9 417.6 578.2 420.5 579.8 423.5 580.9 425.8 581.6 427.2 582.0 428.0 M579.0 407.0 579.9 406.9 581.8 406.6 584.6 406.2 588.4 405.8 592.1 405.9 595.7 406.6 599.2 408.0 602.8 410.0 606.1 411.7 609.4 413.1 612.5 414.1 615.5 414.9 617.8 415.4 619.2 415.8 620.0 416.0 M361.0 569.0 360.4 569.3 359.3 569.9 357.6 570.9 355.4 572.1 353.2 573.3 351.2 574.4 349.4 575.5 347.6 576.5 346.3 577.2 345.4 577.8 345.0 578.0 M361.0 569.0 361.7 569.3 363.1 569.9 365.1 570.9 367.9 572.1 370.4 573.5 372.8 575.0 375.0 576.6 377.0 578.4 378.5 579.7 379.5 580.6 380.0 581.0"/>
<clipPath id="lcl"><polygon points="692,11 692,275 683,286 661,295 655,311 650,320 660,333 658,345 642,355 631,368 640,377 629,390 617,387 612,396 623,408 623,418 617,427 604,437 592,440 586,435 576,433 570,443 561,452 557,468 532,477 501,487 480,492 449,505 436,511 430,530 417,558 405,570 383,586 361,598 342,602 321,598 314,592 328,586 335,573 346,563 327,558 328,548 330,505 333,464 335,436 337,419 341,401 345,389 353,388 359,383 367,375 372,371 379,373 377,365 369,356 362,346 354,344 341,346 334,336 324,326 315,324 307,328 302,335 296,328 289,313 277,299 269,299 270,289 294,273 312,270 341,273 353,254 362,238 368,206 388,209 407,212 422,209 435,203 454,200 476,193 491,197 501,206 516,212 529,215 544,222 547,206 554,203 551,187 544,175 529,168 513,150 507,137 504,100 497,90 529,65 541,64 560,68 579,72 591,68 600,59 596,31 605,30 642,30 650,23 661,14 671,12"/></clipPath>
<path clip-path="url(#lcl)" fill="none" stroke="#000" stroke-width="1" d="M498.0 130.0 C535.0 132.0 560.0 138.0 598.0 84.0 M498.0 132.0 C535.0 134.0 560.0 140.6 602.0 89.0 M498.0 134.0 C535.0 136.0 560.0 143.2 606.0 94.0 M498.0 136.0 C535.0 138.0 560.0 145.8 610.0 99.0 M498.0 138.0 C535.0 140.0 560.0 148.4 614.0 104.0 M498.0 140.0 C535.0 142.0 560.0 151.0 618.0 109.0 M498.0 142.0 C535.0 144.0 560.0 153.6 622.0 114.0 M498.0 144.0 C535.0 146.0 560.0 156.2 626.0 119.0 M498.0 146.0 C535.0 148.0 560.0 158.8 630.0 124.0 M498.0 148.0 C535.0 150.0 560.0 161.4 634.0 129.0 M495.0 90.0 Q545.0 98.0 598.0 74.0 M495.0 98.0 Q545.0 104.0 598.0 83.0 M495.0 106.0 Q545.0 110.0 598.0 92.0 M495.0 114.0 Q545.0 116.0 598.0 101.0 M495.0 122.0 Q545.0 122.0 598.0 110.0 M500.0 156.0 Q530.0 158.0 545.0 206.0 M500.0 159.0 Q536.0 161.0 553.0 206.0 M500.0 162.0 Q542.0 164.0 561.0 206.0 M500.0 165.0 Q548.0 167.0 569.0 206.0"/>
<polyline fill="none" stroke="#00e8f8" stroke-width="1" shape-rendering="crispEdges" points="692,275 683,286 661,295 655,311 650,320 660,333 658,345 642,355 631,368 640,377 629,390 617,387 612,396 623,408 623,418 617,427 604,437 592,440 586,435 576,433 570,443 561,452 557,468 532,477 501,487 480,492 449,505 436,511 430,530 417,558 405,570 383,586 361,598 342,602 321,598 314,592 328,586 335,573 346,563 327,558 328,548 330,505 333,464 335,436 337,419 341,401 345,389 353,388 359,383 367,375 372,371 379,373 377,365 369,356 362,346 354,344 341,346 334,336 324,326 315,324 307,328 302,335 296,328 289,313 277,299 269,299"/>
<clipPath id="icl"><polygon points="168,299 177,301 187,301 194,288 203,293 208,306 210,324 205,339 203,357 199,361 194,350 188,328 177,317 170,306"/></clipPath>
<g clip-path="url(#icl)"><rect x="160" y="280" width="60" height="80" filter="url(#orn)"/></g>
<polygon fill="none" stroke="#00e8f8" stroke-width="1" shape-rendering="crispEdges" points="168,299 177,301 187,301 194,288 203,293 208,306 210,324 205,339 203,357 199,361 194,350 188,328 177,317 170,306"/>
<clipPath id="pc0"><polygon points="351,261 358,256 364,262 360,272 352,271"/></clipPath><g clip-path="url(#pc0)"><rect x="346" y="251" width="40" height="40" filter="url(#orp)"/></g>
<clipPath id="pc1"><polygon points="344,277 352,274 364,272 367,281 360,289 348,286"/></clipPath><g clip-path="url(#pc1)"><rect x="339" y="267" width="40" height="40" filter="url(#orp)"/></g>
<clipPath id="pc2"><polygon points="353,294 360,292 363,301 356,304"/></clipPath><g clip-path="url(#pc2)"><rect x="348" y="287" width="40" height="40" filter="url(#orp)"/></g>
<clipPath id="pc3"><polygon points="295,326 302,323 306,334 297,337"/></clipPath><g clip-path="url(#pc3)"><rect x="290" y="318" width="40" height="40" filter="url(#orp)"/></g>
<clipPath id="pc5"><polygon points="300,391 306,390 307,396 301,397"/></clipPath><g clip-path="url(#pc5)"><rect x="295" y="385" width="40" height="40" filter="url(#orp)"/></g>
<clipPath id="pc6"><polygon points="207,392 212,392 212,396 207,396"/></clipPath><g clip-path="url(#pc6)"><rect x="202" y="387" width="40" height="40" filter="url(#orp)"/></g>
<polygon fill="#f79a36" points="617,586 622,579 628,574 632,566 637,568 634,576 640,581 636,587 629,590 622,592"/>
<polyline fill="none" stroke="#000" stroke-width="1" stroke-dasharray="1 2" shape-rendering="crispEdges" points="269,299 270,289 294,273 312,270 341,273 353,254 362,238 368,206 388,209 407,212 422,209 435,203 454,200 476,193 491,197 501,206 516,212 529,215 544,222 547,206 554,203"/>
<polyline fill="none" stroke="#000" stroke-width="1" stroke-dasharray="1 2" shape-rendering="crispEdges" points="544,175 529,168 513,150 507,137 504,100 497,90 529,65 541,64 560,68 579,72 591,68 600,59"/>
<polyline fill="none" stroke="#000" stroke-width="2.2" points="296,316 299,302 304,292 313,290 324,291 333,296 340,306 344,315 343,324 338,328 333,326 329,319 324,314 315,312 304,313 296,316"/>
<polyline fill="none" stroke="#000" stroke-width="2.2" points="355,355 359,343 366,330 377,315 381,306 380,290 379,268 382,255 386,237 386,231"/>
<polyline fill="none" stroke="#000" stroke-width="7" stroke-dasharray="1.5 9" points="355,355 359,343 366,330 377,315 381,306 380,290 379,268 382,255 386,237 386,231"/>
<polyline fill="none" stroke="#000" stroke-width="6" stroke-dasharray="1.5 11" points="296,316 299,302 304,292 313,290 324,291 333,296 340,306 344,315 343,324 338,328 333,326 329,319 324,314 315,312 304,313 296,316"/>
<ellipse cx="587" cy="188" rx="23" ry="11" transform="rotate(-52 587 188)" fill="none" stroke="#000" stroke-width="2.2"/>
<path fill="#000" shape-rendering="crispEdges" d="M625 251h3v3h-3zM406 489h3v3h-3zM458 485h3v3h-3zM581 413h3v3h-3zM626 256h3v3h-3zM402 256h3v3h-3zM348 499h3v3h-3zM327 328h3v3h-3zM476 343h3v3h-3zM633 185h3v3h-3zM471 286h3v3h-3zM437 367h3v3h-3zM480 422h3v3h-3zM642 226h3v3h-3zM413 499h3v3h-3zM636 315h3v3h-3zM494 207h3v3h-3zM492 299h3v3h-3zM476 369h3v3h-3zM490 349h3v3h-3zM502 412h3v3h-3zM500 286h3v3h-3zM354 447h3v3h-3zM359 265h3v3h-3zM436 475h3v3h-3zM533 317h3v3h-3zM426 233h3v3h-3zM334 554h3v3h-3zM379 301h3v3h-3zM298 326h3v3h-3zM448 247h3v3h-3zM601 218h3v3h-3zM504 374h3v3h-3zM608 174h3v3h-3zM468 297h3v3h-3zM324 321h3v3h-3zM413 495h3v3h-3zM352 403h3v3h-3zM345 507h3v3h-3zM423 353h3v3h-3zM550 307h3v3h-3zM409 360h3v3h-3zM488 325h3v3h-3zM685 197h3v3h-3zM655 278h3v3h-3zM416 327h3v3h-3zM647 295h3v3h-3zM447 342h3v3h-3zM503 323h3v3h-3zM418 212h3v3h-3zM474 269h3v3h-3zM434 288h3v3h-3zM361 288h3v3h-3zM387 449h3v3h-3zM522 337h3v3h-3zM465 280h3v3h-3zM618 332h3v3h-3zM495 387h3v3h-3zM318 299h3v3h-3zM445 417h3v3h-3zM447 289h3v3h-3zM621 230h3v3h-3zM660 200h3v3h-3zM430 322h3v3h-3zM437 419h3v3h-3zM660 290h3v3h-3zM612 285h3v3h-3zM416 304h3v3h-3zM448 310h3v3h-3zM462 272h3v3h-3zM461 217h3v3h-3zM413 306h3v3h-3zM591 395h3v3h-3zM376 220h3v3h-3zM516 376h3v3h-3zM620 305h3v3h-3zM442 311h3v3h-3zM376 287h3v3h-3zM462 347h3v3h-3zM621 326h3v3h-3zM331 538h3v3h-3zM521 305h3v3h-3zM687 217h3v3h-3zM501 373h3v3h-3zM522 459h3v3h-3zM330 491h3v3h-3zM468 299h3v3h-3zM661 181h3v3h-3zM594 357h3v3h-3zM528 347h3v3h-3zM394 302h3v3h-3zM429 417h3v3h-3zM486 237h3v3h-3zM431 222h3v3h-3zM359 262h3v3h-3zM591 292h3v3h-3zM417 391h3v3h-3zM409 397h3v3h-3zM531 440h3v3h-3zM509 299h3v3h-3zM319 290h3v3h-3zM521 274h3v3h-3zM350 295h3v3h-3zM345 407h3v3h-3zM371 342h3v3h-3zM586 255h3v3h-3zM492 209h3v3h-3zM549 447h3v3h-3zM437 297h3v3h-3zM545 349h3v3h-3zM532 291h3v3h-3zM619 383h3v3h-3zM452 290h3v3h-3zM504 398h3v3h-3zM600 351h3v3h-3zM598 177h3v3h-3zM388 291h3v3h-3zM477 195h3v3h-3zM626 273h3v3h-3zM500 295h3v3h-3zM601 201h3v3h-3zM562 340h3v3h-3zM542 361h3v3h-3zM681 187h3v3h-3zM549 337h3v3h-3zM347 426h3v3h-3zM317 286h3v3h-3zM599 330h3v3h-3zM584 385h3v3h-3zM647 184h3v3h-3zM542 281h3v3h-3zM545 367h3v3h-3zM379 274h3v3h-3zM315 290h3v3h-3zM405 335h3v3h-3zM434 309h3v3h-3zM463 295h3v3h-3zM406 290h3v3h-3zM657 229h3v3h-3zM450 210h3v3h-3zM433 402h3v3h-3zM357 589h3v3h-3zM441 221h3v3h-3zM427 237h3v3h-3zM437 267h3v3h-3zM588 272h3v3h-3zM300 324h3v3h-3zM384 507h3v3h-3zM456 413h3v3h-3zM515 350h3v3h-3zM536 345h3v3h-3zM436 351h3v3h-3zM509 266h3v3h-3zM380 374h3v3h-3zM592 272h3v3h-3zM419 376h3v3h-3zM632 376h3v3h-3zM487 326h3v3h-3zM428 462h3v3h-3zM455 494h3v3h-3zM440 431h3v3h-3zM595 274h3v3h-3zM654 272h3v3h-3zM534 310h3v3h-3zM484 297h3v3h-3zM550 294h3v3h-3zM569 396h3v3h-3zM419 344h3v3h-3zM367 263h3v3h-3zM497 405h3v3h-3zM371 214h3v3h-3zM394 446h3v3h-3zM428 259h3v3h-3zM583 214h3v3h-3zM572 410h3v3h-3zM514 370h3v3h-3zM426 499h3v3h-3zM494 326h3v3h-3zM560 209h3v3h-3zM439 455h3v3h-3zM543 351h3v3h-3zM581 215h3v3h-3zM379 366h3v3h-3zM541 294h3v3h-3zM637 245h3v3h-3zM478 197h3v3h-3zM583 367h3v3h-3zM370 232h3v3h-3zM416 295h3v3h-3zM381 498h3v3h-3zM348 311h3v3h-3zM602 245h3v3h-3zM391 455h3v3h-3zM556 320h3v3h-3zM384 385h3v3h-3zM467 264h3v3h-3zM538 234h3v3h-3zM633 371h3v3h-3zM559 262h3v3h-3zM501 272h3v3h-3zM513 246h3v3h-3zM388 450h3v3h-3zM617 232h3v3h-3zM521 476h3v3h-3zM505 228h3v3h-3zM568 371h3v3h-3zM386 242h3v3h-3zM485 292h3v3h-3zM461 265h3v3h-3zM525 375h3v3h-3zM628 224h3v3h-3zM398 296h3v3h-3zM564 206h3v3h-3zM536 221h3v3h-3zM575 273h3v3h-3zM643 311h3v3h-3zM578 200h3v3h-3zM503 471h3v3h-3zM465 290h3v3h-3zM411 332h3v3h-3zM559 297h3v3h-3zM590 156h3v3h-3zM665 285h3v3h-3zM583 424h3v3h-3zM579 194h3v3h-3zM485 328h3v3h-3zM611 216h3v3h-3zM399 424h3v3h-3zM487 245h3v3h-3zM437 406h3v3h-3zM562 282h3v3h-3zM455 373h3v3h-3zM500 391h3v3h-3zM630 237h3v3h-3zM354 300h3v3h-3zM530 441h3v3h-3zM516 225h3v3h-3zM547 270h3v3h-3zM458 327h3v3h-3zM397 433h3v3h-3zM444 438h3v3h-3zM503 372h3v3h-3zM589 179h3v3h-3zM563 258h3v3h-3zM448 392h3v3h-3zM496 398h3v3h-3zM505 300h3v3h-3zM476 319h3v3h-3zM598 279h3v3h-3zM574 304h3v3h-3zM583 294h3v3h-3zM607 345h3v3h-3zM306 305h3v3h-3zM598 354h3v3h-3zM465 332h3v3h-3zM568 352h3v3h-3zM588 325h3v3h-3zM416 292h3v3h-3zM379 340h3v3h-3zM654 275h3v3h-3zM466 390h3v3h-3zM528 287h3v3h-3zM480 468h3v3h-3zM391 288h3v3h-3zM376 312h3v3h-3zM477 377h3v3h-3zM461 295h3v3h-3zM452 312h3v3h-3zM478 356h3v3h-3zM608 315h3v3h-3zM403 497h3v3h-3zM510 381h3v3h-3zM572 296h3v3h-3zM611 211h3v3h-3zM381 229h3v3h-3zM646 174h3v3h-3zM589 310h3v3h-3zM365 313h3v3h-3zM437 337h3v3h-3zM574 284h3v3h-3zM503 304h3v3h-3zM536 388h3v3h-3zM630 296h3v3h-3zM462 445h3v3h-3zM639 321h3v3h-3zM541 446h3v3h-3zM583 331h3v3h-3zM536 220h3v3h-3zM448 228h3v3h-3zM415 485h3v3h-3zM454 383h3v3h-3zM474 260h3v3h-3zM527 306h3v3h-3zM424 457h3v3h-3zM316 289h3v3h-3zM368 382h3v3h-3zM553 343h3v3h-3zM419 243h3v3h-3zM567 394h3v3h-3zM657 199h3v3h-3zM639 348h3v3h-3zM403 314h3v3h-3zM600 378h3v3h-3zM369 575h3v3h-3zM401 266h3v3h-3zM289 303h3v3h-3zM685 223h3v3h-3zM540 365h3v3h-3zM554 351h3v3h-3zM623 237h3v3h-3zM406 212h3v3h-3zM433 283h3v3h-3zM517 405h3v3h-3zM358 298h3v3h-3zM640 346h3v3h-3zM460 295h3v3h-3zM530 351h3v3h-3zM500 341h3v3h-3zM460 323h3v3h-3zM321 322h3v3h-3zM356 568h3v3h-3zM448 337h3v3h-3zM395 232h3v3h-3zM336 305h3v3h-3zM451 312h3v3h-3zM441 289h3v3h-3zM486 439h3v3h-3zM438 305h3v3h-3zM601 290h3v3h-3zM484 439h3v3h-3zM348 329h3v3h-3zM432 337h3v3h-3zM348 576h3v3h-3zM420 263h3v3h-3zM509 307h3v3h-3zM545 211h3v3h-3zM636 233h3v3h-3zM511 369h3v3h-3zM507 225h3v3h-3zM516 240h3v3h-3zM562 324h3v3h-3zM486 475h3v3h-3zM527 361h3v3h-3zM541 468h3v3h-3zM407 277h3v3h-3zM590 180h3v3h-3zM480 256h3v3h-3zM402 289h3v3h-3zM586 334h3v3h-3zM492 218h3v3h-3zM606 392h3v3h-3zM414 221h3v3h-3zM665 235h3v3h-3zM475 316h3v3h-3zM376 261h3v3h-3zM373 475h3v3h-3zM302 324h3v3h-3zM471 362h3v3h-3zM393 318h3v3h-3zM547 278h3v3h-3zM539 290h3v3h-3zM594 320h3v3h-3zM354 332h3v3h-3zM422 330h3v3h-3zM431 301h3v3h-3zM562 281h3v3h-3zM530 274h3v3h-3zM494 434h3v3h-3zM497 351h3v3h-3zM464 332h3v3h-3zM666 221h3v3h-3zM472 255h3v3h-3zM508 415h3v3h-3zM430 508h3v3h-3zM545 345h3v3h-3zM407 333h3v3h-3zM597 361h3v3h-3zM559 296h3v3h-3zM490 332h3v3h-3zM504 287h3v3h-3zM633 207h3v3h-3zM487 426h3v3h-3zM551 189h3v3h-3zM423 471h3v3h-3zM599 178h3v3h-3zM303 301h3v3h-3zM657 294h3v3h-3zM493 274h3v3h-3zM469 249h3v3h-3zM544 269h3v3h-3zM345 303h3v3h-3zM548 447h3v3h-3zM410 518h3v3h-3zM554 316h3v3h-3zM544 259h3v3h-3zM525 467h3v3h-3zM351 299h3v3h-3zM347 493h3v3h-3zM626 296h3v3h-3zM537 298h3v3h-3zM585 240h3v3h-3zM564 303h3v3h-3zM554 339h3v3h-3zM426 246h3v3h-3zM481 480h3v3h-3zM545 358h3v3h-3zM651 290h3v3h-3zM488 440h3v3h-3zM613 280h3v3h-3zM412 436h3v3h-3zM396 567h3v3h-3zM614 250h3v3h-3zM513 348h3v3h-3zM583 270h3v3h-3zM474 341h3v3h-3zM417 249h3v3h-3zM514 349h3v3h-3zM299 293h3v3h-3zM646 229h3v3h-3zM551 343h3v3h-3zM377 238h3v3h-3zM610 330h3v3h-3zM550 434h3v3h-3zM537 338h3v3h-3zM527 368h3v3h-3zM602 270h3v3h-3zM579 248h3v3h-3zM408 272h3v3h-3zM477 317h3v3h-3zM472 404h3v3h-3zM624 200h3v3h-3zM387 301h3v3h-3zM377 314h3v3h-3zM581 356h3v3h-3zM554 426h3v3h-3zM579 422h3v3h-3zM472 447h3v3h-3zM370 340h3v3h-3zM443 292h3v3h-3zM560 336h3v3h-3zM310 317h3v3h-3zM585 323h3v3h-3zM655 303h3v3h-3zM620 250h3v3h-3zM594 309h3v3h-3zM631 337h3v3h-3zM587 363h3v3h-3zM380 533h3v3h-3zM336 540h3v3h-3zM570 374h3v3h-3zM533 355h3v3h-3zM572 296h3v3h-3zM664 207h3v3h-3zM529 292h3v3h-3zM394 312h3v3h-3zM521 287h3v3h-3zM627 283h3v3h-3zM383 409h3v3h-3zM408 237h3v3h-3zM458 419h3v3h-3zM411 469h3v3h-3zM579 364h3v3h-3zM447 330h3v3h-3zM595 312h3v3h-3zM553 308h3v3h-3zM541 225h3v3h-3zM389 255h3v3h-3zM287 283h3v3h-3zM537 282h3v3h-3zM424 331h3v3h-3zM586 414h3v3h-3zM672 254h3v3h-3zM298 282h3v3h-3zM364 221h3v3h-3zM559 300h3v3h-3zM556 409h3v3h-3zM438 462h3v3h-3zM584 230h3v3h-3zM484 337h3v3h-3zM616 217h3v3h-3zM475 383h3v3h-3zM587 211h3v3h-3zM424 341h3v3h-3zM402 399h3v3h-3zM418 373h3v3h-3zM538 403h3v3h-3zM492 293h3v3h-3zM522 255h3v3h-3zM532 415h3v3h-3zM295 296h3v3h-3zM489 297h3v3h-3zM498 391h3v3h-3zM549 208h3v3h-3zM301 295h3v3h-3zM535 247h3v3h-3zM432 328h3v3h-3zM533 236h3v3h-3zM613 289h3v3h-3zM381 540h3v3h-3zM421 335h3v3h-3zM465 263h3v3h-3zM381 276h3v3h-3zM580 361h3v3h-3zM373 221h3v3h-3zM566 167h3v3h-3zM489 435h3v3h-3zM422 258h3v3h-3zM519 334h3v3h-3zM477 301h3v3h-3zM486 335h3v3h-3zM471 436h3v3h-3zM625 261h3v3h-3zM598 345h3v3h-3zM434 425h3v3h-3zM607 336h3v3h-3zM293 286h3v3h-3zM516 389h3v3h-3zM458 314h3v3h-3zM373 308h3v3h-3zM400 475h3v3h-3zM507 333h3v3h-3zM392 304h3v3h-3zM497 455h3v3h-3zM584 206h3v3h-3zM571 437h3v3h-3zM365 339h3v3h-3zM473 302h3v3h-3zM458 392h3v3h-3zM349 584h3v3h-3zM615 403h3v3h-3zM506 268h3v3h-3zM385 234h3v3h-3zM408 404h3v3h-3zM501 360h3v3h-3zM372 219h3v3h-3zM441 324h3v3h-3zM538 283h3v3h-3zM416 219h3v3h-3zM489 371h3v3h-3zM648 244h3v3h-3zM345 553h3v3h-3zM545 238h3v3h-3zM489 222h3v3h-3zM476 211h3v3h-3zM553 333h3v3h-3zM444 460h3v3h-3zM624 372h3v3h-3zM585 368h3v3h-3zM404 309h3v3h-3zM640 273h3v3h-3zM451 376h3v3h-3zM559 291h3v3h-3zM500 459h3v3h-3zM406 491h3v3h-3zM566 354h3v3h-3zM532 345h3v3h-3zM596 384h3v3h-3zM546 367h3v3h-3zM591 204h3v3h-3zM542 253h3v3h-3zM448 502h3v3h-3zM383 298h3v3h-3zM379 302h3v3h-3zM407 339h3v3h-3zM590 326h3v3h-3zM629 246h3v3h-3zM614 304h3v3h-3zM514 388h3v3h-3zM434 397h3v3h-3zM492 307h3v3h-3zM305 308h3v3h-3zM445 389h3v3h-3zM386 480h3v3h-3zM588 261h3v3h-3zM429 430h3v3h-3zM406 268h3v3h-3zM573 301h3v3h-3zM559 247h3v3h-3zM350 298h3v3h-3zM338 513h3v3h-3zM521 285h3v3h-3zM561 352h3v3h-3zM398 454h3v3h-3zM484 318h3v3h-3zM601 299h3v3h-3zM341 331h3v3h-3zM656 208h3v3h-3zM487 471h3v3h-3zM541 226h3v3h-3zM341 470h3v3h-3zM364 543h3v3h-3zM638 262h3v3h-3zM429 499h3v3h-3zM401 393h3v3h-3zM399 291h3v3h-3zM604 217h3v3h-3zM523 288h3v3h-3zM459 297h3v3h-3zM528 358h3v3h-3zM536 232h3v3h-3zM622 173h3v3h-3zM441 220h3v3h-3zM356 458h3v3h-3zM430 233h3v3h-3zM400 214h3v3h-3zM508 460h3v3h-3zM570 385h3v3h-3zM568 341h3v3h-3zM380 494h3v3h-3zM395 320h3v3h-3zM510 302h3v3h-3zM571 372h3v3h-3zM474 445h3v3h-3zM464 440h3v3h-3zM372 324h3v3h-3zM462 396h3v3h-3zM391 420h3v3h-3zM675 209h3v3h-3zM466 341h3v3h-3zM478 198h3v3h-3zM595 390h3v3h-3zM536 367h3v3h-3zM636 237h3v3h-3zM432 363h3v3h-3zM512 108h3v3h-3zM489 257h3v3h-3zM507 340h3v3h-3zM461 496h3v3h-3zM611 402h3v3h-3zM483 287h3v3h-3zM485 483h3v3h-3zM488 226h3v3h-3zM401 329h3v3h-3zM377 284h3v3h-3zM356 492h3v3h-3zM380 493h3v3h-3zM477 201h3v3h-3zM417 276h3v3h-3zM302 287h3v3h-3zM413 421h3v3h-3zM551 413h3v3h-3zM652 207h3v3h-3zM551 282h3v3h-3zM575 431h3v3h-3zM375 447h3v3h-3zM637 345h3v3h-3zM555 394h3v3h-3zM541 293h3v3h-3zM462 340h3v3h-3zM530 464h3v3h-3zM618 278h3v3h-3zM311 270h3v3h-3zM500 251h3v3h-3zM454 215h3v3h-3zM610 421h3v3h-3zM402 431h3v3h-3zM462 384h3v3h-3zM343 302h3v3h-3zM556 434h3v3h-3zM416 397h3v3h-3zM447 368h3v3h-3zM547 317h3v3h-3zM520 467h3v3h-3zM403 248h3v3h-3zM642 273h3v3h-3zM549 451h3v3h-3zM562 206h3v3h-3zM426 408h3v3h-3zM458 260h3v3h-3zM525 317h3v3h-3zM348 537h3v3h-3zM589 250h3v3h-3zM636 340h3v3h-3zM330 505h3v3h-3zM566 422h3v3h-3zM539 258h3v3h-3zM555 364h3v3h-3zM403 215h3v3h-3zM471 481h3v3h-3zM477 239h3v3h-3zM624 211h3v3h-3zM678 223h3v3h-3zM424 320h3v3h-3zM390 330h3v3h-3zM604 266h3v3h-3zM377 331h3v3h-3zM573 316h3v3h-3zM447 233h3v3h-3zM490 265h3v3h-3zM482 290h3v3h-3zM512 310h3v3h-3zM499 374h3v3h-3zM517 266h3v3h-3zM472 391h3v3h-3zM410 489h3v3h-3zM642 298h3v3h-3zM600 374h3v3h-3zM366 409h3v3h-3zM396 495h3v3h-3zM654 306h3v3h-3zM571 271h3v3h-3zM636 310h3v3h-3zM269 290h3v3h-3zM398 545h3v3h-3zM326 312h3v3h-3zM601 217h3v3h-3zM330 524h3v3h-3zM624 264h3v3h-3zM571 352h3v3h-3zM559 280h3v3h-3zM511 403h3v3h-3zM439 290h3v3h-3zM420 522h3v3h-3zM541 470h3v3h-3zM441 393h3v3h-3zM530 398h3v3h-3zM552 397h3v3h-3zM552 203h3v3h-3zM594 306h3v3h-3zM584 209h3v3h-3zM449 231h3v3h-3zM384 423h3v3h-3zM340 308h3v3h-3zM556 332h3v3h-3zM617 406h3v3h-3zM540 329h3v3h-3zM410 233h3v3h-3zM331 287h3v3h-3zM563 421h3v3h-3zM381 405h3v3h-3zM557 167h3v3h-3zM481 464h3v3h-3zM617 313h3v3h-3zM342 342h3v3h-3zM426 386h3v3h-3zM531 444h3v3h-3zM488 485h3v3h-3zM450 335h3v3h-3zM567 407h3v3h-3zM459 270h3v3h-3zM434 436h3v3h-3zM580 342h3v3h-3zM500 460h3v3h-3zM444 258h3v3h-3zM546 379h3v3h-3zM598 291h3v3h-3zM403 398h3v3h-3zM454 286h3v3h-3zM678 213h3v3h-3zM486 231h3v3h-3zM564 389h3v3h-3zM531 366h3v3h-3zM611 392h3v3h-3zM571 302h3v3h-3zM535 380h3v3h-3zM355 336h3v3h-3zM531 387h3v3h-3zM540 339h3v3h-3zM542 465h3v3h-3zM497 346h3v3h-3zM592 236h3v3h-3zM399 518h3v3h-3zM627 280h3v3h-3zM420 471h3v3h-3zM466 294h3v3h-3zM342 413h3v3h-3zM353 584h3v3h-3zM367 387h3v3h-3zM617 363h3v3h-3zM303 315h3v3h-3zM629 226h3v3h-3zM422 372h3v3h-3zM346 589h3v3h-3zM607 285h3v3h-3zM408 391h3v3h-3zM364 553h3v3h-3zM367 467h3v3h-3zM438 262h3v3h-3zM648 307h3v3h-3zM605 236h3v3h-3zM381 301h3v3h-3zM340 421h3v3h-3zM608 289h3v3h-3zM337 291h3v3h-3zM624 255h3v3h-3zM493 323h3v3h-3zM530 259h3v3h-3zM353 410h3v3h-3zM300 305h3v3h-3zM331 282h3v3h-3zM554 323h3v3h-3zM533 275h3v3h-3zM526 376h3v3h-3zM487 350h3v3h-3zM381 509h3v3h-3zM599 259h3v3h-3zM574 328h3v3h-3zM430 447h3v3h-3zM631 305h3v3h-3zM565 214h3v3h-3zM546 397h3v3h-3zM462 457h3v3h-3zM407 543h3v3h-3zM505 349h3v3h-3zM526 397h3v3h-3zM518 476h3v3h-3zM579 252h3v3h-3zM605 236h3v3h-3zM563 218h3v3h-3zM488 286h3v3h-3zM525 233h3v3h-3zM589 204h3v3h-3zM472 429h3v3h-3zM677 246h3v3h-3zM667 245h3v3h-3zM564 279h3v3h-3zM354 483h3v3h-3zM349 331h3v3h-3zM596 428h3v3h-3zM506 367h3v3h-3zM367 248h3v3h-3zM427 429h3v3h-3zM485 355h3v3h-3zM516 394h3v3h-3zM557 453h3v3h-3zM372 271h3v3h-3zM386 223h3v3h-3zM587 257h3v3h-3zM515 354h3v3h-3zM484 283h3v3h-3zM474 236h3v3h-3zM534 326h3v3h-3zM480 232h3v3h-3zM384 390h3v3h-3zM624 374h3v3h-3zM438 437h3v3h-3zM641 272h3v3h-3zM583 344h3v3h-3zM563 344h3v3h-3zM343 429h3v3h-3zM473 361h3v3h-3zM397 304h3v3h-3zM470 475h3v3h-3zM618 409h3v3h-3zM561 335h3v3h-3zM599 232h3v3h-3zM369 314h3v3h-3zM444 397h3v3h-3zM478 456h3v3h-3zM504 219h3v3h-3zM363 444h3v3h-3zM367 451h3v3h-3zM370 457h3v3h-3zM371 466h3v3h-3zM373 476h3v3h-3zM376 485h3v3h-3zM379 491h3v3h-3zM382 503h3v3h-3zM385 516h3v3h-3zM388 522h3v3h-3zM390 532h3v3h-3zM382 538h3v3h-3zM373 544h3v3h-3zM367 549h3v3h-3zM362 554h3v3h-3zM360 563h3v3h-3zM395 488h3v3h-3zM401 483h3v3h-3zM407 478h3v3h-3zM413 472h3v3h-3zM419 466h3v3h-3zM426 460h3v3h-3zM330 504h3v3h-3zM335 504h3v3h-3zM340 504h3v3h-3zM345 504h3v3h-3zM350 504h3v3h-3zM345 393h3v3h-3zM347 402h3v3h-3zM349 411h3v3h-3zM351 419h3v3h-3z"/>
<path fill="#c00000" shape-rendering="crispEdges" d="M626 252h1v1h-1zM407 490h1v1h-1zM459 486h1v1h-1zM582 414h1v1h-1zM627 257h1v1h-1zM403 257h1v1h-1zM349 500h1v1h-1zM328 329h1v1h-1zM477 344h1v1h-1zM634 186h1v1h-1zM472 287h1v1h-1zM438 368h1v1h-1zM481 423h1v1h-1zM643 227h1v1h-1zM414 500h1v1h-1zM637 316h1v1h-1zM495 208h1v1h-1zM493 300h1v1h-1zM477 370h1v1h-1zM491 350h1v1h-1zM503 413h1v1h-1zM501 287h1v1h-1zM355 448h1v1h-1zM360 266h1v1h-1zM437 476h1v1h-1zM534 318h1v1h-1zM427 234h1v1h-1zM335 555h1v1h-1zM380 302h1v1h-1zM299 327h1v1h-1zM449 248h1v1h-1zM602 219h1v1h-1zM505 375h1v1h-1zM609 175h1v1h-1zM469 298h1v1h-1zM325 322h1v1h-1zM414 496h1v1h-1zM353 404h1v1h-1zM346 508h1v1h-1zM424 354h1v1h-1zM551 308h1v1h-1zM410 361h1v1h-1zM489 326h1v1h-1zM686 198h1v1h-1zM656 279h1v1h-1zM417 328h1v1h-1zM648 296h1v1h-1zM448 343h1v1h-1zM504 324h1v1h-1zM419 213h1v1h-1zM475 270h1v1h-1zM435 289h1v1h-1zM362 289h1v1h-1zM388 450h1v1h-1zM523 338h1v1h-1zM466 281h1v1h-1zM619 333h1v1h-1zM496 388h1v1h-1zM319 300h1v1h-1zM446 418h1v1h-1zM448 290h1v1h-1zM622 231h1v1h-1zM661 201h1v1h-1zM431 323h1v1h-1zM438 420h1v1h-1zM661 291h1v1h-1zM613 286h1v1h-1zM417 305h1v1h-1zM449 311h1v1h-1zM463 273h1v1h-1zM462 218h1v1h-1zM414 307h1v1h-1zM592 396h1v1h-1zM377 221h1v1h-1zM517 377h1v1h-1zM621 306h1v1h-1zM443 312h1v1h-1zM377 288h1v1h-1zM463 348h1v1h-1zM622 327h1v1h-1zM332 539h1v1h-1zM522 306h1v1h-1zM688 218h1v1h-1zM502 374h1v1h-1zM523 460h1v1h-1zM331 492h1v1h-1zM469 300h1v1h-1zM662 182h1v1h-1zM595 358h1v1h-1zM529 348h1v1h-1zM395 303h1v1h-1zM430 418h1v1h-1zM487 238h1v1h-1zM432 223h1v1h-1zM360 263h1v1h-1zM592 293h1v1h-1zM418 392h1v1h-1zM410 398h1v1h-1zM532 441h1v1h-1zM510 300h1v1h-1zM320 291h1v1h-1zM522 275h1v1h-1zM351 296h1v1h-1zM346 408h1v1h-1zM372 343h1v1h-1zM587 256h1v1h-1zM493 210h1v1h-1zM550 448h1v1h-1zM438 298h1v1h-1zM546 350h1v1h-1zM533 292h1v1h-1zM620 384h1v1h-1zM453 291h1v1h-1zM505 399h1v1h-1zM601 352h1v1h-1zM599 178h1v1h-1zM389 292h1v1h-1zM478 196h1v1h-1zM627 274h1v1h-1zM501 296h1v1h-1zM602 202h1v1h-1zM563 341h1v1h-1zM543 362h1v1h-1zM682 188h1v1h-1zM550 338h1v1h-1zM348 427h1v1h-1zM318 287h1v1h-1zM600 331h1v1h-1zM585 386h1v1h-1zM648 185h1v1h-1zM543 282h1v1h-1zM546 368h1v1h-1zM380 275h1v1h-1zM316 291h1v1h-1zM406 336h1v1h-1zM435 310h1v1h-1zM464 296h1v1h-1zM407 291h1v1h-1zM658 230h1v1h-1zM451 211h1v1h-1zM434 403h1v1h-1zM358 590h1v1h-1zM442 222h1v1h-1zM428 238h1v1h-1zM438 268h1v1h-1zM589 273h1v1h-1zM301 325h1v1h-1zM385 508h1v1h-1zM457 414h1v1h-1zM516 351h1v1h-1zM537 346h1v1h-1zM437 352h1v1h-1zM510 267h1v1h-1zM381 375h1v1h-1zM593 273h1v1h-1zM420 377h1v1h-1zM633 377h1v1h-1zM488 327h1v1h-1zM429 463h1v1h-1zM456 495h1v1h-1zM441 432h1v1h-1zM596 275h1v1h-1zM655 273h1v1h-1zM535 311h1v1h-1zM485 298h1v1h-1zM551 295h1v1h-1zM570 397h1v1h-1zM420 345h1v1h-1zM368 264h1v1h-1zM498 406h1v1h-1zM372 215h1v1h-1zM395 447h1v1h-1zM429 260h1v1h-1zM584 215h1v1h-1zM573 411h1v1h-1zM515 371h1v1h-1zM427 500h1v1h-1zM495 327h1v1h-1zM561 210h1v1h-1zM440 456h1v1h-1zM544 352h1v1h-1zM582 216h1v1h-1zM380 367h1v1h-1zM542 295h1v1h-1zM638 246h1v1h-1zM479 198h1v1h-1zM584 368h1v1h-1zM371 233h1v1h-1zM417 296h1v1h-1zM382 499h1v1h-1zM349 312h1v1h-1zM603 246h1v1h-1zM392 456h1v1h-1zM557 321h1v1h-1zM385 386h1v1h-1zM468 265h1v1h-1zM539 235h1v1h-1zM634 372h1v1h-1zM560 263h1v1h-1zM502 273h1v1h-1zM514 247h1v1h-1zM389 451h1v1h-1zM618 233h1v1h-1zM522 477h1v1h-1zM506 229h1v1h-1zM569 372h1v1h-1zM387 243h1v1h-1zM486 293h1v1h-1zM462 266h1v1h-1zM526 376h1v1h-1zM629 225h1v1h-1zM399 297h1v1h-1zM565 207h1v1h-1zM537 222h1v1h-1zM576 274h1v1h-1zM644 312h1v1h-1zM579 201h1v1h-1zM504 472h1v1h-1zM466 291h1v1h-1zM412 333h1v1h-1zM560 298h1v1h-1zM591 157h1v1h-1zM666 286h1v1h-1zM584 425h1v1h-1zM580 195h1v1h-1zM486 329h1v1h-1zM612 217h1v1h-1zM400 425h1v1h-1zM488 246h1v1h-1zM438 407h1v1h-1zM563 283h1v1h-1zM456 374h1v1h-1zM501 392h1v1h-1zM631 238h1v1h-1zM355 301h1v1h-1zM531 442h1v1h-1zM517 226h1v1h-1zM548 271h1v1h-1zM459 328h1v1h-1zM398 434h1v1h-1zM445 439h1v1h-1zM504 373h1v1h-1zM590 180h1v1h-1zM564 259h1v1h-1zM449 393h1v1h-1zM497 399h1v1h-1zM506 301h1v1h-1zM477 320h1v1h-1zM599 280h1v1h-1zM575 305h1v1h-1zM584 295h1v1h-1zM608 346h1v1h-1zM307 306h1v1h-1zM599 355h1v1h-1zM466 333h1v1h-1zM569 353h1v1h-1zM589 326h1v1h-1zM417 293h1v1h-1zM380 341h1v1h-1zM655 276h1v1h-1zM467 391h1v1h-1zM529 288h1v1h-1zM481 469h1v1h-1zM392 289h1v1h-1zM377 313h1v1h-1zM478 378h1v1h-1zM462 296h1v1h-1zM453 313h1v1h-1zM479 357h1v1h-1zM609 316h1v1h-1zM404 498h1v1h-1zM511 382h1v1h-1zM573 297h1v1h-1zM612 212h1v1h-1zM382 230h1v1h-1zM647 175h1v1h-1zM590 311h1v1h-1zM366 314h1v1h-1zM438 338h1v1h-1zM575 285h1v1h-1zM504 305h1v1h-1zM537 389h1v1h-1zM631 297h1v1h-1zM463 446h1v1h-1zM640 322h1v1h-1zM542 447h1v1h-1zM584 332h1v1h-1zM537 221h1v1h-1zM449 229h1v1h-1zM416 486h1v1h-1zM455 384h1v1h-1zM475 261h1v1h-1zM528 307h1v1h-1zM425 458h1v1h-1zM317 290h1v1h-1zM369 383h1v1h-1zM554 344h1v1h-1zM420 244h1v1h-1zM568 395h1v1h-1zM658 200h1v1h-1zM640 349h1v1h-1zM404 315h1v1h-1zM601 379h1v1h-1zM370 576h1v1h-1zM402 267h1v1h-1zM290 304h1v1h-1zM686 224h1v1h-1zM541 366h1v1h-1zM555 352h1v1h-1zM624 238h1v1h-1zM407 213h1v1h-1zM434 284h1v1h-1zM518 406h1v1h-1zM359 299h1v1h-1zM641 347h1v1h-1zM461 296h1v1h-1zM531 352h1v1h-1zM501 342h1v1h-1zM461 324h1v1h-1zM322 323h1v1h-1zM357 569h1v1h-1zM449 338h1v1h-1zM396 233h1v1h-1zM337 306h1v1h-1zM452 313h1v1h-1zM442 290h1v1h-1zM487 440h1v1h-1zM439 306h1v1h-1zM602 291h1v1h-1zM485 440h1v1h-1zM349 330h1v1h-1zM433 338h1v1h-1zM349 577h1v1h-1zM421 264h1v1h-1zM510 308h1v1h-1zM546 212h1v1h-1zM637 234h1v1h-1zM512 370h1v1h-1zM508 226h1v1h-1zM517 241h1v1h-1zM563 325h1v1h-1zM487 476h1v1h-1zM528 362h1v1h-1zM542 469h1v1h-1zM408 278h1v1h-1zM591 181h1v1h-1zM481 257h1v1h-1zM403 290h1v1h-1zM587 335h1v1h-1zM493 219h1v1h-1zM607 393h1v1h-1zM415 222h1v1h-1zM666 236h1v1h-1zM476 317h1v1h-1zM377 262h1v1h-1zM374 476h1v1h-1zM303 325h1v1h-1zM472 363h1v1h-1zM394 319h1v1h-1zM548 279h1v1h-1zM540 291h1v1h-1zM595 321h1v1h-1zM355 333h1v1h-1zM423 331h1v1h-1zM432 302h1v1h-1zM563 282h1v1h-1zM531 275h1v1h-1zM495 435h1v1h-1zM498 352h1v1h-1zM465 333h1v1h-1zM667 222h1v1h-1zM473 256h1v1h-1zM509 416h1v1h-1zM431 509h1v1h-1zM546 346h1v1h-1zM408 334h1v1h-1zM598 362h1v1h-1zM560 297h1v1h-1zM491 333h1v1h-1zM505 288h1v1h-1zM634 208h1v1h-1zM488 427h1v1h-1zM552 190h1v1h-1zM424 472h1v1h-1zM600 179h1v1h-1zM304 302h1v1h-1zM658 295h1v1h-1zM494 275h1v1h-1zM470 250h1v1h-1zM545 270h1v1h-1zM346 304h1v1h-1zM549 448h1v1h-1zM411 519h1v1h-1zM555 317h1v1h-1zM545 260h1v1h-1zM526 468h1v1h-1zM352 300h1v1h-1zM348 494h1v1h-1zM627 297h1v1h-1zM538 299h1v1h-1zM586 241h1v1h-1zM565 304h1v1h-1zM555 340h1v1h-1zM427 247h1v1h-1zM482 481h1v1h-1zM546 359h1v1h-1zM652 291h1v1h-1zM489 441h1v1h-1zM614 281h1v1h-1zM413 437h1v1h-1zM397 568h1v1h-1zM615 251h1v1h-1zM514 349h1v1h-1zM584 271h1v1h-1zM475 342h1v1h-1zM418 250h1v1h-1zM515 350h1v1h-1zM300 294h1v1h-1zM647 230h1v1h-1zM552 344h1v1h-1zM378 239h1v1h-1zM611 331h1v1h-1zM551 435h1v1h-1zM538 339h1v1h-1zM528 369h1v1h-1zM603 271h1v1h-1zM580 249h1v1h-1zM409 273h1v1h-1zM478 318h1v1h-1zM473 405h1v1h-1zM625 201h1v1h-1zM388 302h1v1h-1zM378 315h1v1h-1zM582 357h1v1h-1zM555 427h1v1h-1zM580 423h1v1h-1zM473 448h1v1h-1zM371 341h1v1h-1zM444 293h1v1h-1zM561 337h1v1h-1zM311 318h1v1h-1zM586 324h1v1h-1zM656 304h1v1h-1zM621 251h1v1h-1zM595 310h1v1h-1zM632 338h1v1h-1zM588 364h1v1h-1zM381 534h1v1h-1zM337 541h1v1h-1zM571 375h1v1h-1zM534 356h1v1h-1zM573 297h1v1h-1zM665 208h1v1h-1zM530 293h1v1h-1zM395 313h1v1h-1zM522 288h1v1h-1zM628 284h1v1h-1zM384 410h1v1h-1zM409 238h1v1h-1zM459 420h1v1h-1zM412 470h1v1h-1zM580 365h1v1h-1zM448 331h1v1h-1zM596 313h1v1h-1zM554 309h1v1h-1zM542 226h1v1h-1zM390 256h1v1h-1zM288 284h1v1h-1zM538 283h1v1h-1zM425 332h1v1h-1zM587 415h1v1h-1zM673 255h1v1h-1zM299 283h1v1h-1zM365 222h1v1h-1zM560 301h1v1h-1zM557 410h1v1h-1zM439 463h1v1h-1zM585 231h1v1h-1zM485 338h1v1h-1zM617 218h1v1h-1zM476 384h1v1h-1zM588 212h1v1h-1zM425 342h1v1h-1zM403 400h1v1h-1zM419 374h1v1h-1zM539 404h1v1h-1zM493 294h1v1h-1zM523 256h1v1h-1zM533 416h1v1h-1zM296 297h1v1h-1zM490 298h1v1h-1zM499 392h1v1h-1zM550 209h1v1h-1zM302 296h1v1h-1zM536 248h1v1h-1zM433 329h1v1h-1zM534 237h1v1h-1zM614 290h1v1h-1zM382 541h1v1h-1zM422 336h1v1h-1zM466 264h1v1h-1zM382 277h1v1h-1zM581 362h1v1h-1zM374 222h1v1h-1zM567 168h1v1h-1zM490 436h1v1h-1zM423 259h1v1h-1zM520 335h1v1h-1zM478 302h1v1h-1zM487 336h1v1h-1zM472 437h1v1h-1zM626 262h1v1h-1zM599 346h1v1h-1zM435 426h1v1h-1zM608 337h1v1h-1zM294 287h1v1h-1zM517 390h1v1h-1zM459 315h1v1h-1zM374 309h1v1h-1zM401 476h1v1h-1zM508 334h1v1h-1zM393 305h1v1h-1zM498 456h1v1h-1zM585 207h1v1h-1zM572 438h1v1h-1zM366 340h1v1h-1zM474 303h1v1h-1zM459 393h1v1h-1zM350 585h1v1h-1zM616 404h1v1h-1zM507 269h1v1h-1zM386 235h1v1h-1zM409 405h1v1h-1zM502 361h1v1h-1zM373 220h1v1h-1zM442 325h1v1h-1zM539 284h1v1h-1zM417 220h1v1h-1zM490 372h1v1h-1zM649 245h1v1h-1zM346 554h1v1h-1zM546 239h1v1h-1zM490 223h1v1h-1zM477 212h1v1h-1zM554 334h1v1h-1zM445 461h1v1h-1zM625 373h1v1h-1zM586 369h1v1h-1zM405 310h1v1h-1zM641 274h1v1h-1zM452 377h1v1h-1zM560 292h1v1h-1zM501 460h1v1h-1zM407 492h1v1h-1zM567 355h1v1h-1zM533 346h1v1h-1zM597 385h1v1h-1zM547 368h1v1h-1zM592 205h1v1h-1zM543 254h1v1h-1zM449 503h1v1h-1zM384 299h1v1h-1zM380 303h1v1h-1zM408 340h1v1h-1zM591 327h1v1h-1zM630 247h1v1h-1zM615 305h1v1h-1zM515 389h1v1h-1zM435 398h1v1h-1zM493 308h1v1h-1zM306 309h1v1h-1zM446 390h1v1h-1zM387 481h1v1h-1zM589 262h1v1h-1zM430 431h1v1h-1zM407 269h1v1h-1zM574 302h1v1h-1zM560 248h1v1h-1zM351 299h1v1h-1zM339 514h1v1h-1zM522 286h1v1h-1zM562 353h1v1h-1zM399 455h1v1h-1zM485 319h1v1h-1zM602 300h1v1h-1zM342 332h1v1h-1zM657 209h1v1h-1zM488 472h1v1h-1zM542 227h1v1h-1zM342 471h1v1h-1zM365 544h1v1h-1zM639 263h1v1h-1zM430 500h1v1h-1zM402 394h1v1h-1zM400 292h1v1h-1zM605 218h1v1h-1zM524 289h1v1h-1zM460 298h1v1h-1zM529 359h1v1h-1zM537 233h1v1h-1zM623 174h1v1h-1zM442 221h1v1h-1zM357 459h1v1h-1zM431 234h1v1h-1zM401 215h1v1h-1zM509 461h1v1h-1zM571 386h1v1h-1zM569 342h1v1h-1zM381 495h1v1h-1zM396 321h1v1h-1zM511 303h1v1h-1zM572 373h1v1h-1zM475 446h1v1h-1zM465 441h1v1h-1zM373 325h1v1h-1zM463 397h1v1h-1zM392 421h1v1h-1zM676 210h1v1h-1zM467 342h1v1h-1zM479 199h1v1h-1zM596 391h1v1h-1zM537 368h1v1h-1zM637 238h1v1h-1zM433 364h1v1h-1zM513 109h1v1h-1zM490 258h1v1h-1zM508 341h1v1h-1zM462 497h1v1h-1zM612 403h1v1h-1zM484 288h1v1h-1zM486 484h1v1h-1zM489 227h1v1h-1zM402 330h1v1h-1zM378 285h1v1h-1zM357 493h1v1h-1zM381 494h1v1h-1zM478 202h1v1h-1zM418 277h1v1h-1zM303 288h1v1h-1zM414 422h1v1h-1zM552 414h1v1h-1zM653 208h1v1h-1zM552 283h1v1h-1zM576 432h1v1h-1zM376 448h1v1h-1zM638 346h1v1h-1zM556 395h1v1h-1zM542 294h1v1h-1zM463 341h1v1h-1zM531 465h1v1h-1zM619 279h1v1h-1zM312 271h1v1h-1zM501 252h1v1h-1zM455 216h1v1h-1zM611 422h1v1h-1zM403 432h1v1h-1zM463 385h1v1h-1zM344 303h1v1h-1zM557 435h1v1h-1zM417 398h1v1h-1zM448 369h1v1h-1zM548 318h1v1h-1zM521 468h1v1h-1zM404 249h1v1h-1zM643 274h1v1h-1zM550 452h1v1h-1zM563 207h1v1h-1zM427 409h1v1h-1zM459 261h1v1h-1zM526 318h1v1h-1zM349 538h1v1h-1zM590 251h1v1h-1zM637 341h1v1h-1zM331 506h1v1h-1zM567 423h1v1h-1zM540 259h1v1h-1zM556 365h1v1h-1zM404 216h1v1h-1zM472 482h1v1h-1zM478 240h1v1h-1zM625 212h1v1h-1zM679 224h1v1h-1zM425 321h1v1h-1zM391 331h1v1h-1zM605 267h1v1h-1zM378 332h1v1h-1zM574 317h1v1h-1zM448 234h1v1h-1zM491 266h1v1h-1zM483 291h1v1h-1zM513 311h1v1h-1zM500 375h1v1h-1zM518 267h1v1h-1zM473 392h1v1h-1zM411 490h1v1h-1zM643 299h1v1h-1zM601 375h1v1h-1zM367 410h1v1h-1zM397 496h1v1h-1zM655 307h1v1h-1zM572 272h1v1h-1zM637 311h1v1h-1zM270 291h1v1h-1zM399 546h1v1h-1zM327 313h1v1h-1zM602 218h1v1h-1zM331 525h1v1h-1zM625 265h1v1h-1zM572 353h1v1h-1zM560 281h1v1h-1zM512 404h1v1h-1zM440 291h1v1h-1zM421 523h1v1h-1zM542 471h1v1h-1zM442 394h1v1h-1zM531 399h1v1h-1zM553 398h1v1h-1zM553 204h1v1h-1zM595 307h1v1h-1zM585 210h1v1h-1zM450 232h1v1h-1zM385 424h1v1h-1zM341 309h1v1h-1zM557 333h1v1h-1zM618 407h1v1h-1zM541 330h1v1h-1zM411 234h1v1h-1zM332 288h1v1h-1zM564 422h1v1h-1zM382 406h1v1h-1zM558 168h1v1h-1zM482 465h1v1h-1zM618 314h1v1h-1zM343 343h1v1h-1zM427 387h1v1h-1zM532 445h1v1h-1zM489 486h1v1h-1zM451 336h1v1h-1zM568 408h1v1h-1zM460 271h1v1h-1zM435 437h1v1h-1zM581 343h1v1h-1zM501 461h1v1h-1zM445 259h1v1h-1zM547 380h1v1h-1zM599 292h1v1h-1zM404 399h1v1h-1zM455 287h1v1h-1zM679 214h1v1h-1zM487 232h1v1h-1zM565 390h1v1h-1zM532 367h1v1h-1zM612 393h1v1h-1zM572 303h1v1h-1zM536 381h1v1h-1zM356 337h1v1h-1zM532 388h1v1h-1zM541 340h1v1h-1zM543 466h1v1h-1zM498 347h1v1h-1zM593 237h1v1h-1zM400 519h1v1h-1zM628 281h1v1h-1zM421 472h1v1h-1zM467 295h1v1h-1zM343 414h1v1h-1zM354 585h1v1h-1zM368 388h1v1h-1zM618 364h1v1h-1zM304 316h1v1h-1zM630 227h1v1h-1zM423 373h1v1h-1zM347 590h1v1h-1zM608 286h1v1h-1zM409 392h1v1h-1zM365 554h1v1h-1zM368 468h1v1h-1zM439 263h1v1h-1zM649 308h1v1h-1zM606 237h1v1h-1zM382 302h1v1h-1zM341 422h1v1h-1zM609 290h1v1h-1zM338 292h1v1h-1zM625 256h1v1h-1zM494 324h1v1h-1zM531 260h1v1h-1zM354 411h1v1h-1zM301 306h1v1h-1zM332 283h1v1h-1zM555 324h1v1h-1zM534 276h1v1h-1zM527 377h1v1h-1zM488 351h1v1h-1zM382 510h1v1h-1zM600 260h1v1h-1zM575 329h1v1h-1zM431 448h1v1h-1zM632 306h1v1h-1zM566 215h1v1h-1zM547 398h1v1h-1zM463 458h1v1h-1zM408 544h1v1h-1zM506 350h1v1h-1zM527 398h1v1h-1zM519 477h1v1h-1zM580 253h1v1h-1zM606 237h1v1h-1zM564 219h1v1h-1zM489 287h1v1h-1zM526 234h1v1h-1zM590 205h1v1h-1zM473 430h1v1h-1zM678 247h1v1h-1zM668 246h1v1h-1zM565 280h1v1h-1zM355 484h1v1h-1zM350 332h1v1h-1zM597 429h1v1h-1zM507 368h1v1h-1zM368 249h1v1h-1zM428 430h1v1h-1zM486 356h1v1h-1zM517 395h1v1h-1zM558 454h1v1h-1zM373 272h1v1h-1zM387 224h1v1h-1zM588 258h1v1h-1zM516 355h1v1h-1zM485 284h1v1h-1zM475 237h1v1h-1zM535 327h1v1h-1zM481 233h1v1h-1zM385 391h1v1h-1zM625 375h1v1h-1zM439 438h1v1h-1zM642 273h1v1h-1zM584 345h1v1h-1zM564 345h1v1h-1zM344 430h1v1h-1zM474 362h1v1h-1zM398 305h1v1h-1zM471 476h1v1h-1zM619 410h1v1h-1zM562 336h1v1h-1zM600 233h1v1h-1zM370 315h1v1h-1zM445 398h1v1h-1zM479 457h1v1h-1zM505 220h1v1h-1zM364 445h1v1h-1zM368 452h1v1h-1zM371 458h1v1h-1zM372 467h1v1h-1zM374 477h1v1h-1zM377 486h1v1h-1zM380 492h1v1h-1zM383 504h1v1h-1zM386 517h1v1h-1zM389 523h1v1h-1zM391 533h1v1h-1zM383 539h1v1h-1zM374 545h1v1h-1zM368 550h1v1h-1zM363 555h1v1h-1zM361 564h1v1h-1zM396 489h1v1h-1zM402 484h1v1h-1zM408 479h1v1h-1zM414 473h1v1h-1zM420 467h1v1h-1zM427 461h1v1h-1zM331 505h1v1h-1zM336 505h1v1h-1zM341 505h1v1h-1zM346 505h1v1h-1zM351 505h1v1h-1zM346 394h1v1h-1zM348 403h1v1h-1zM350 412h1v1h-1zM352 420h1v1h-1z"/>
<g fill="#0000ff" stroke="#000" stroke-width="1" shape-rendering="crispEdges"><circle cx="623" cy="50" r="2.5"/><circle cx="680" cy="55" r="2.5"/><circle cx="650" cy="87" r="2.5"/><circle cx="524" cy="93" r="2.5"/><circle cx="627" cy="109" r="2.5"/><circle cx="550" cy="138" r="2.5"/><circle cx="650" cy="153" r="2.5"/><circle cx="528" cy="145" r="2.5"/><circle cx="521" cy="150" r="2.5"/><circle cx="532" cy="153" r="2.5"/><circle cx="562" cy="162" r="2.5"/><circle cx="597" cy="164" r="2.5"/><circle cx="637" cy="166" r="2.5"/><circle cx="545" cy="171" r="2.5"/><circle cx="557" cy="178" r="2.5"/><circle cx="558" cy="180" r="2.5"/><circle cx="629" cy="175" r="2.5"/><circle cx="619" cy="187" r="2.5"/><circle cx="574" cy="187" r="2.5"/><circle cx="585" cy="189" r="2.5"/><circle cx="600" cy="189" r="2.5"/><circle cx="562" cy="195" r="2.5"/><circle cx="609" cy="196" r="2.5"/><circle cx="606" cy="198" r="2.5"/><circle cx="617" cy="203" r="2.5"/><circle cx="601" cy="203" r="2.5"/><circle cx="637" cy="209" r="2.5"/><circle cx="640" cy="215" r="2.5"/><circle cx="686" cy="211" r="2.5"/><circle cx="630" cy="218" r="2.5"/><circle cx="620" cy="218" r="2.5"/><circle cx="635" cy="221" r="2.5"/><circle cx="597" cy="220" r="2.5"/><circle cx="659" cy="220" r="2.5"/><circle cx="654" cy="222" r="2.5"/><circle cx="645" cy="223" r="2.5"/><circle cx="622" cy="225" r="2.5"/><circle cx="688" cy="226" r="2.5"/><circle cx="684" cy="229" r="2.5"/><circle cx="632" cy="228" r="2.5"/><circle cx="648" cy="228" r="2.5"/><circle cx="611" cy="229" r="2.5"/><circle cx="630" cy="231" r="2.5"/><circle cx="687" cy="236" r="2.5"/><circle cx="679" cy="235" r="2.5"/><circle cx="615" cy="237" r="2.5"/><circle cx="647" cy="236" r="2.5"/><circle cx="644" cy="237" r="2.5"/><circle cx="680" cy="239" r="2.5"/><circle cx="672" cy="240" r="2.5"/><circle cx="600" cy="240" r="2.5"/><circle cx="635" cy="240" r="2.5"/><circle cx="679" cy="243" r="2.5"/><circle cx="672" cy="244" r="2.5"/><circle cx="667" cy="244" r="2.5"/><circle cx="623" cy="245" r="2.5"/><circle cx="635" cy="246" r="2.5"/><circle cx="555" cy="253" r="2.5"/><circle cx="609" cy="254" r="2.5"/><circle cx="615" cy="254" r="2.5"/><circle cx="630" cy="253" r="2.5"/><circle cx="635" cy="253" r="2.5"/><circle cx="647" cy="253" r="2.5"/><circle cx="655" cy="252" r="2.5"/><circle cx="574" cy="257" r="2.5"/><circle cx="618" cy="260" r="2.5"/><circle cx="637" cy="260" r="2.5"/><circle cx="598" cy="263" r="2.5"/><circle cx="612" cy="263" r="2.5"/><circle cx="664" cy="266" r="2.5"/><circle cx="665" cy="271" r="2.5"/><circle cx="596" cy="273" r="2.5"/><circle cx="590" cy="277" r="2.5"/><circle cx="558" cy="275" r="2.5"/><circle cx="558" cy="283" r="2.5"/><circle cx="614" cy="279" r="2.5"/><circle cx="626" cy="277" r="2.5"/><circle cx="621" cy="293" r="2.5"/><circle cx="679" cy="296" r="2.5"/><circle cx="587" cy="301" r="2.5"/><circle cx="604" cy="302" r="2.5"/><circle cx="623" cy="302" r="2.5"/><circle cx="631" cy="301" r="2.5"/><circle cx="492" cy="198" r="2.5"/><circle cx="499" cy="209" r="2.5"/><circle cx="496" cy="216" r="2.5"/><circle cx="491" cy="212" r="2.5"/><circle cx="513" cy="230" r="2.5"/><circle cx="478" cy="195" r="2.5"/><circle cx="494" cy="204" r="2.5"/><circle cx="500" cy="208" r="2.5"/><circle cx="455" cy="206" r="2.5"/><circle cx="499" cy="219" r="2.5"/><circle cx="440" cy="216" r="2.5"/><circle cx="472" cy="222" r="2.5"/><circle cx="432" cy="224" r="2.5"/><circle cx="417" cy="227" r="2.5"/><circle cx="389" cy="238" r="2.5"/><circle cx="424" cy="244" r="2.5"/><circle cx="454" cy="250" r="2.5"/><circle cx="490" cy="252" r="2.5"/><circle cx="430" cy="259" r="2.5"/><circle cx="534" cy="260" r="2.5"/><circle cx="417" cy="280" r="2.5"/><circle cx="480" cy="274" r="2.5"/><circle cx="442" cy="278" r="2.5"/><circle cx="410" cy="286" r="2.5"/><circle cx="425" cy="286" r="2.5"/><circle cx="469" cy="284" r="2.5"/><circle cx="497" cy="287" r="2.5"/><circle cx="469" cy="293" r="2.5"/><circle cx="436" cy="293" r="2.5"/><circle cx="449" cy="300" r="2.5"/><circle cx="423" cy="302" r="2.5"/><circle cx="532" cy="300" r="2.5"/><circle cx="408" cy="313" r="2.5"/><circle cx="470" cy="314" r="2.5"/><circle cx="485" cy="313" r="2.5"/><circle cx="509" cy="313" r="2.5"/><circle cx="497" cy="317" r="2.5"/><circle cx="514" cy="317" r="2.5"/><circle cx="420" cy="331" r="2.5"/><circle cx="409" cy="342" r="2.5"/><circle cx="475" cy="341" r="2.5"/><circle cx="463" cy="344" r="2.5"/><circle cx="272" cy="292" r="2.5"/><circle cx="275" cy="296" r="2.5"/><circle cx="283" cy="305" r="2.5"/><circle cx="292" cy="307" r="2.5"/><circle cx="312" cy="304" r="2.5"/><circle cx="302" cy="315" r="2.5"/><circle cx="312" cy="314" r="2.5"/><circle cx="323" cy="315" r="2.5"/><circle cx="334" cy="311" r="2.5"/><circle cx="341" cy="324" r="2.5"/><circle cx="375" cy="250" r="2.5"/><circle cx="441" cy="357" r="2.5"/><circle cx="468" cy="353" r="2.5"/><circle cx="487" cy="349" r="2.5"/><circle cx="477" cy="357" r="2.5"/><circle cx="388" cy="353" r="2.5"/><circle cx="391" cy="360" r="2.5"/><circle cx="375" cy="359" r="2.5"/><circle cx="385" cy="366" r="2.5"/><circle cx="384" cy="370" r="2.5"/><circle cx="388" cy="378" r="2.5"/><circle cx="382" cy="382" r="2.5"/><circle cx="397" cy="384" r="2.5"/><circle cx="371" cy="380" r="2.5"/><circle cx="481" cy="373" r="2.5"/><circle cx="486" cy="374" r="2.5"/><circle cx="458" cy="398" r="2.5"/><circle cx="438" cy="398" r="2.5"/><circle cx="406" cy="407" r="2.5"/><circle cx="356" cy="412" r="2.5"/><circle cx="485" cy="227" r="2.5"/><circle cx="535" cy="260" r="2.5"/><circle cx="575" cy="257" r="2.5"/><circle cx="497" cy="288" r="2.5"/><circle cx="485" cy="313" r="2.5"/><circle cx="532" cy="299" r="2.5"/><circle cx="574" cy="315" r="2.5"/><circle cx="586" cy="305" r="2.5"/><circle cx="588" cy="311" r="2.5"/><circle cx="592" cy="313" r="2.5"/><circle cx="588" cy="319" r="2.5"/><circle cx="592" cy="320" r="2.5"/><circle cx="586" cy="322" r="2.5"/><circle cx="603" cy="302" r="2.5"/><circle cx="623" cy="303" r="2.5"/><circle cx="632" cy="301" r="2.5"/><circle cx="627" cy="277" r="2.5"/><circle cx="598" cy="264" r="2.5"/><circle cx="611" cy="263" r="2.5"/><circle cx="626" cy="354" r="2.5"/><circle cx="539" cy="343" r="2.5"/><circle cx="485" cy="349" r="2.5"/><circle cx="496" cy="352" r="2.5"/><circle cx="488" cy="360" r="2.5"/><circle cx="482" cy="373" r="2.5"/><circle cx="584" cy="354" r="2.5"/><circle cx="582" cy="373" r="2.5"/><circle cx="569" cy="379" r="2.5"/><circle cx="498" cy="391" r="2.5"/><circle cx="523" cy="399" r="2.5"/><circle cx="547" cy="400" r="2.5"/><circle cx="558" cy="394" r="2.5"/><circle cx="537" cy="408" r="2.5"/><circle cx="526" cy="420" r="2.5"/><circle cx="571" cy="405" r="2.5"/><circle cx="571" cy="414" r="2.5"/><circle cx="596" cy="392" r="2.5"/><circle cx="601" cy="400" r="2.5"/><circle cx="616" cy="414" r="2.5"/><circle cx="574" cy="422" r="2.5"/><circle cx="583" cy="425" r="2.5"/><circle cx="478" cy="358" r="2.5"/><circle cx="495" cy="351" r="2.5"/><circle cx="610" cy="423" r="2.5"/><circle cx="522" cy="429" r="2.5"/><circle cx="524" cy="433" r="2.5"/><circle cx="532" cy="439" r="2.5"/><circle cx="552" cy="448" r="2.5"/><circle cx="482" cy="479" r="2.5"/><circle cx="482" cy="487" r="2.5"/><circle cx="457" cy="416" r="2.5"/><circle cx="438" cy="456" r="2.5"/><circle cx="375" cy="498" r="2.5"/><circle cx="386" cy="501" r="2.5"/><circle cx="361" cy="569" r="2.5"/><circle cx="355" cy="412" r="2.5"/></g>
<rect x="141.5" y="429.5" width="107" height="102" fill="#fff" stroke="#000" stroke-width="1.3"/>
<text x="196" y="442" font-family="Liberation Serif" font-weight="bold" font-size="8" text-anchor="middle" letter-spacing="0.6">CHỈ DẪN</text>
<rect x="154.5" y="456.5" width="14" height="9" fill="#fff" stroke="#000"/>
<rect x="154.5" y="470.5" width="14" height="9" fill="#fff" stroke="#000"/>
<rect x="154.5" y="484.5" width="14" height="9" fill="#fff" stroke="#000"/>
<rect x="154.5" y="498.5" width="14" height="9" fill="#fff" stroke="#000"/>
<rect x="158" y="458" width="6" height="6" fill="#e00000" stroke="#000" stroke-width="0.5"/>
<circle cx="161" cy="475" r="5" fill="#0000ff" stroke="#000" stroke-width="0.6"/>
<path d="M156 491l4 -2h6v-2" stroke="#0000ff" stroke-width="2.2" fill="none"/>
<path d="M156 505l4 -2h6v-2" stroke="#e00000" stroke-width="2.2" fill="none"/>
<path d="M172 460h36" stroke="#000" stroke-width="1.4" stroke-dasharray="3 1 2 1"/>
<path d="M172 474h40" stroke="#000" stroke-width="1.4" stroke-dasharray="3 1 2 1"/>
<path d="M172 488h60" stroke="#000" stroke-width="1.4" stroke-dasharray="3 1 2 1"/>
<path d="M172 502h33" stroke="#000" stroke-width="1.4" stroke-dasharray="3 1 2 1"/>
<rect x="108" y="478" width="2" height="3" fill="#f79a36"/>
<rect x="160" y="394" width="2" height="3" fill="#f79a36"/>
<rect x="253" y="411" width="2" height="3" fill="#f79a36"/>
<rect x="260" y="416" width="2" height="3" fill="#f79a36"/>
<rect x="257" y="406" width="2" height="3" fill="#f79a36"/>
<rect x="207" y="392" width="2" height="3" fill="#f79a36"/>
<rect x="302" y="394" width="2" height="3" fill="#f79a36"/>
</svg>
</div>
<!-- title buttons -->
<div class="rais" style="left:981px;top:2px;width:13px;height:11px"><div class="a" style="left:3px;top:6px;width:6px;height:2px;background:#000"></div></div>
<div class="rais" style="left:994px;top:2px;width:13px;height:11px"><svg class="a" style="left:2px;top:1px" width="9" height="8"><path d="M3.5 0.5h5v4M3.5 0.5v2M0.5 2.5h5v5h-5z M0.5 3.5h5" stroke="#000" fill="none"/></svg></div>
<div class="rais" style="left:1009px;top:2px;width:13px;height:11px"><svg class="a" style="left:2px;top:1px" width="8" height="8"><path d="M0.5 0.5l7 7M7.5 0.5l-7 7" stroke="#000" stroke-width="1.6" fill="none"/></svg></div>
<!-- doc buttons -->
<div class="rais" style="left:972px;top:18px;width:16px;height:14px"><div class="a" style="left:4px;top:8px;width:6px;height:2px;background:#000"></div></div>
<div class="rais" style="left:988px;top:18px;width:16px;height:14px"><svg class="a" style="left:3px;top:2px" width="9" height="9"><path d="M3.5 0.5h5v5h-2M3.5 0.5v2M3.5 1.5h5 M0.5 3.5h5v5h-5z M0.5 4.5h5" stroke="#000" fill="none"/></svg></div>
<div class="rais" style="left:1006px;top:18px;width:16px;height:14px"><svg class="a" style="left:3px;top:2px" width="9" height="8"><path d="M0.5 0.5l8 7M8.5 0.5l-8 7" stroke="#000" stroke-width="1.5" fill="none"/></svg></div>
<!-- menu icon -->
<div class="a" style="left:4px;top:17px;width:16px;height:16px;background:#808080;border-left:1px solid #000;border-top:1px solid #000080">
 <div class="a" style="left:0;top:0;width:12px;height:3px;background:#000080"></div>
 <div class="a" style="left:1px;top:4px;width:6px;height:8px;background:#fff"></div>
 <div class="a" style="left:8px;top:7px;width:7px;height:1px;background:#ff0"></div>
 <div class="a" style="left:8px;top:8px;width:7px;height:2px;background:#f00"></div>
 <div class="a" style="left:8px;top:10px;width:7px;height:2px;background:#f99"></div>
 <div class="a" style="left:8px;top:12px;width:7px;height:2px;background:#c0c"></div>
 <div class="a" style="left:4px;top:14px;width:11px;height:2px;background:#44f"></div>
</div>
<!-- vertical scrollbar -->
<div class="a dith" style="left:1009px;top:94px;width:15px;height:609px"></div>
<div class="rais" style="left:1009px;top:94px;width:15px;height:15px"><svg class="a" style="left:3px;top:4px" width="8" height="5"><path d="M3.5 0.5L0 4h7z" fill="#000"/><path d="M0 4h7" stroke="#000"/></svg></div>
<div class="rais" style="left:1009px;top:404px;width:15px;height:15px"></div>
<div class="rais" style="left:1009px;top:688px;width:15px;height:15px"><svg class="a" style="left:3px;top:4px" width="8" height="5"><path d="M0 0h7L3.5 4z" fill="#000"/></svg></div>
<!-- horizontal scrollbar -->
<div class="a dith" style="left:0;top:703px;width:1009px;height:15px"></div>
<div class="rais" style="left:0;top:703px;width:15px;height:15px"><svg class="a" style="left:4px;top:3px" width="5" height="8"><path d="M4 0v7L0.5 3.5z" fill="#000"/></svg></div>
<div class="rais" style="left:498px;top:703px;width:15px;height:15px"></div>
<div class="rais" style="left:994px;top:703px;width:15px;height:15px"><svg class="a" style="left:5px;top:3px" width="5" height="8"><path d="M0 0v7L3.5 3.5z" fill="#000"/></svg></div>
<div class="a" style="left:1009px;top:703px;width:15px;height:15px;background:#c0c0c0;border-left:1px solid #000;border-top:1px solid #000"></div>
<!-- status bar -->
<div class="a" style="left:0;top:718px;width:1024px;height:23px;background:#c0c0c0;border-top:1px solid #dfdfdf"></div>
<div class="sunk" style="left:6px;top:721px;width:180px;height:17px"></div>
<div class="t" style="left:8px;top:722px;line-height:14px">Zoom: 667.4 km</div>
<svg class="a" style="left:177px;top:725px" width="7" height="4"><path d="M3 0L0 3h6z" fill="#000"/></svg>
<div class="sunk" style="left:188px;top:721px;width:180px;height:17px"></div>
<div class="t" style="left:190px;top:722px;line-height:14px">Editing: Salt_Fresh_N22</div>
<svg class="a" style="left:359px;top:725px" width="7" height="4"><path d="M3 0L0 3h6z" fill="#000"/></svg>
<div class="sunk" style="left:370px;top:721px;width:180px;height:17px"></div>
<div class="t" style="left:372px;top:722px;line-height:14px">Selecting: None</div>
<div class="sunk" style="left:552px;top:721px;width:22px;height:17px"></div>
<div class="sunk" style="left:576px;top:721px;width:34px;height:17px"></div>
<!-- taskbar -->
<div class="a" style="left:0;top:740px;width:1024px;height:28px;background:#c0c0c0;border-top:1px solid #dfdfdf"></div>
<div class="a" style="left:0;top:741px;width:1024px;height:1px;background:#fff"></div>
<div class="rais" style="left:2px;top:744px;width:52px;height:19px"></div>
<div class="t" style="left:22px;top:746px;font-weight:bold;line-height:14px">Start</div>
<div class="a" style="left:56px;top:744px;width:1px;height:22px;background:#808080"></div>
<div class="a" style="left:57px;top:744px;width:1px;height:22px;background:#fff"></div>
<div class="a" style="left:60px;top:746px;width:3px;height:18px;border-left:1px solid #fff;border-top:1px solid #fff;border-right:1px solid #808080;border-bottom:1px solid #808080"></div>
<div class="a" style="left:260px;top:744px;width:1px;height:22px;background:#808080"></div>
<div class="a" style="left:261px;top:744px;width:1px;height:22px;background:#fff"></div>
<div class="a" style="left:264px;top:746px;width:3px;height:18px;border-left:1px solid #fff;border-top:1px solid #fff;border-right:1px solid #808080;border-bottom:1px solid #808080"></div>
<div class="rais" style="left:270px;top:744px;width:120px;height:19px"></div>
<div class="t" style="left:290px;top:746px;line-height:14px">WinPopup</div>
<div class="rais" style="left:392px;top:744px;width:120px;height:19px"></div>
<div class="t" style="left:412px;top:746px;line-height:14px">Microsoft PowerPo...</div>
<div class="rais" style="left:515px;top:744px;width:120px;height:19px"></div>
<div class="t" style="left:535px;top:746px;line-height:14px">Integral Informatio...</div>
<div class="a dith" style="left:637px;top:744px;width:120px;height:19px;border-top:1px solid #000;border-left:1px solid #000;border-right:1px solid #fff;border-bottom:1px solid #fff"></div>
<div class="t" style="left:658px;top:747px;line-height:14px;font-weight:bold">MapInfo Profe...</div>
<div class="sunk" style="left:893px;top:744px;width:129px;height:21px"></div>
<div class="t" style="left:968px;top:748px;line-height:14px">10:17 AM</div>
<!-- title icon -->
<svg class="a" style="left:2px;top:1px" width="14" height="12" viewBox="0 0 14 12"><path d="M1 11 Q3 3 13 1 L13 3 Q5 5 3 11z" fill="#ffff00"/><path d="M2 11 Q4 5 13 3 L13 6 Q6 7 4 11z" fill="#ff4000"/><path d="M3 11 Q5 7 13 6 L13 10 Q8 9 5 11z" fill="#ff00ff"/><path d="M4.5 11 Q8 9 13 10 L13 11z" fill="#8000a0"/></svg>
<!-- start logo -->
<svg class="a" style="left:5px;top:748px" width="14" height="10" viewBox="0 0 14 10" shape-rendering="crispEdges"><rect x="0" y="2" width="3" height="1" fill="#f00"/><rect x="0" y="4" width="3" height="1" fill="#0f0"/><rect x="0" y="6" width="3" height="1" fill="#00f"/><rect x="0" y="8" width="3" height="1" fill="#ff0"/><path d="M4 3l3-2 6 0 1 7-4 2-6-1z" fill="#000"/><rect x="6" y="2" width="3" height="3" fill="#f00"/><rect x="10" y="2" width="3" height="3" fill="#0c0"/><rect x="5" y="6" width="3" height="3" fill="#00f"/><rect x="9" y="6" width="3" height="3" fill="#ff0"/></svg>
<!-- quick launch icons -->
<svg class="a" style="left:69px;top:747px" width="16" height="16" shape-rendering="crispEdges"><rect x="0" y="0" width="15" height="15" fill="#000"/><rect x="1" y="1" width="12" height="11" fill="#f00"/><rect x="1" y="12" width="13" height="2" fill="#fff"/><text x="2" y="9" font-family="Liberation Sans" font-weight="bold" font-size="9" fill="#fff">14</text><rect x="11" y="11" width="4" height="4" fill="#fff" stroke="#000"/></svg>
<svg class="a" style="left:92px;top:747px" width="16" height="16"><path d="M1 2h5l2 4 4-4h3l-5 6 5 6h-5l-2-4-4 4h-3l5-6z" fill="#00c0c0" stroke="#000" stroke-width="0.7"/></svg>
<svg class="a" style="left:115px;top:747px" width="16" height="16"><text x="0" y="14" font-family="Liberation Serif" font-style="italic" font-weight="bold" font-size="15" fill="#00e0e0" stroke="#004040" stroke-width="0.5">W</text></svg>
<svg class="a" style="left:138px;top:747px" width="16" height="16"><rect x="1" y="1" width="3" height="14" fill="#ff0"/><path d="M2 15L6 1" stroke="#f00" stroke-width="2.5"/><path d="M3 8l10 5" stroke="#f00" stroke-width="2"/><path d="M5 6q4 2 6 6M4 12q3-3 8-1" stroke="#00f" stroke-width="1.5" fill="none"/><path d="M9 6l5-5" stroke="#cc0" stroke-width="2"/></svg>
<svg class="a" style="left:161px;top:747px" width="16" height="16"><rect x="0" y="1" width="16" height="14" fill="#0080c0"/><path d="M2 10l8-4 3 4-8 4z" fill="#fff" stroke="#000" stroke-width="0.8"/><path d="M8 9l6-8" stroke="#ff0" stroke-width="2.5"/><path d="M13 2l2-1" stroke="#f00" stroke-width="2"/></svg>
<svg class="a" style="left:184px;top:747px" width="16" height="16"><rect x="0" y="0" width="16" height="16" fill="#00c0e0"/><path d="M0 10q6-6 16 0v6h-16z" fill="#008040"/><circle cx="5" cy="11" r="3" fill="#ff0"/><path d="M7 3l4 4" stroke="#804000" stroke-width="2"/><path d="M0 14q8-4 16 0v2h-16z" fill="#000080"/></svg>
<svg class="a" style="left:207px;top:747px" width="16" height="16"><path d="M0 3h6l1 1h7v10h-14z" fill="#ffe080" stroke="#808000" stroke-width="0.8"/><circle cx="7" cy="8" r="3" fill="#80ffff" stroke="#000080" stroke-width="1.2"/><path d="M9 10l4 4" stroke="#0000c0" stroke-width="2"/></svg>
<svg class="a" style="left:230px;top:747px" width="16" height="16"><rect x="1" y="6" width="5" height="9" fill="#0040c0"/><rect x="2" y="8" width="3" height="3" fill="#80c0ff"/><circle cx="11" cy="5" r="3" fill="none" stroke="#000" stroke-width="2"/><path d="M11 8v4M5 12h10" stroke="#606000" stroke-width="1.5"/></svg>
<!-- task button icons -->
<svg class="a" style="left:274px;top:746px" width="16" height="16"><rect x="2" y="3" width="6" height="11" fill="#c000c0" stroke="#000" stroke-width="0.6"/><rect x="3" y="1" width="4" height="3" fill="#f00"/><path d="M8 8l4-1 2 2" stroke="#000" fill="none"/><rect x="11" y="6" width="3" height="2" fill="#ff0"/></svg>
<svg class="a" style="left:396px;top:746px" width="16" height="16" shape-rendering="crispEdges"><rect x="1" y="2" width="14" height="11" fill="#000"/><rect x="2" y="3" width="12" height="9" fill="#00c0c0"/><rect x="4" y="5" width="8" height="5" fill="#fff"/><rect x="5" y="6" width="4" height="3" fill="#f00"/></svg>
<svg class="a" style="left:519px;top:746px" width="16" height="16"><circle cx="5" cy="5" r="3.5" fill="#ff0" stroke="#000" stroke-width="1"/><path d="M7 7l6 6M10 10l-2 2M12 12l-2 2" stroke="#000" stroke-width="2"/><path d="M7 7l6 6" stroke="#ff0" stroke-width="1"/></svg>
<svg class="a" style="left:642px;top:747px" width="16" height="16"><path d="M1 14 Q3 4 14 2 L14 4 Q5 6 3 14z" fill="#ffff00"/><path d="M2 14 Q4 6 14 4 L14 7 Q6 8 4 14z" fill="#ff4000"/><path d="M3 14 Q5 9 14 7 L14 12 Q8 11 5 14z" fill="#ff00ff"/><path d="M4.5 14 Q8 12 14 12 L14 14z" fill="#8000a0"/></svg>
<!-- tray icons -->
<div class="a" style="left:890px;top:744px;width:1px;height:22px;background:#808080"></div>
<div class="a" style="left:891px;top:744px;width:1px;height:22px;background:#fff"></div>
<svg class="a" style="left:896px;top:747px" width="70" height="16" shape-rendering="crispEdges">
<rect x="1" y="1" width="9" height="12" fill="#fff" stroke="#000"/><rect x="3" y="3" width="5" height="2" fill="#000"/><circle cx="9" cy="12" r="3" fill="#f00"/><rect x="8" y="11" width="2" height="2" fill="#fff"/>
<rect x="14" y="2" width="9" height="11" fill="#fff" stroke="#000"/><rect x="16" y="4" width="2" height="7" fill="#000"/><rect x="19" y="4" width="2" height="7" fill="#000"/>
<path d="M29 7h3v-3h3v3h3v3h-3v3h-3v-3h-3z" fill="#800000"/>
<rect x="41" y="3" width="9" height="4" fill="#0c0"/><rect x="44" y="2" width="5" height="3" fill="#f0f"/><rect x="40" y="8" width="11" height="5" fill="#fff" stroke="#000"/>
<rect x="54" y="1" width="10" height="12" fill="#ff0" stroke="#000"/><rect x="57" y="5" width="2" height="3" fill="#f00"/>
</svg>

</body></html>
